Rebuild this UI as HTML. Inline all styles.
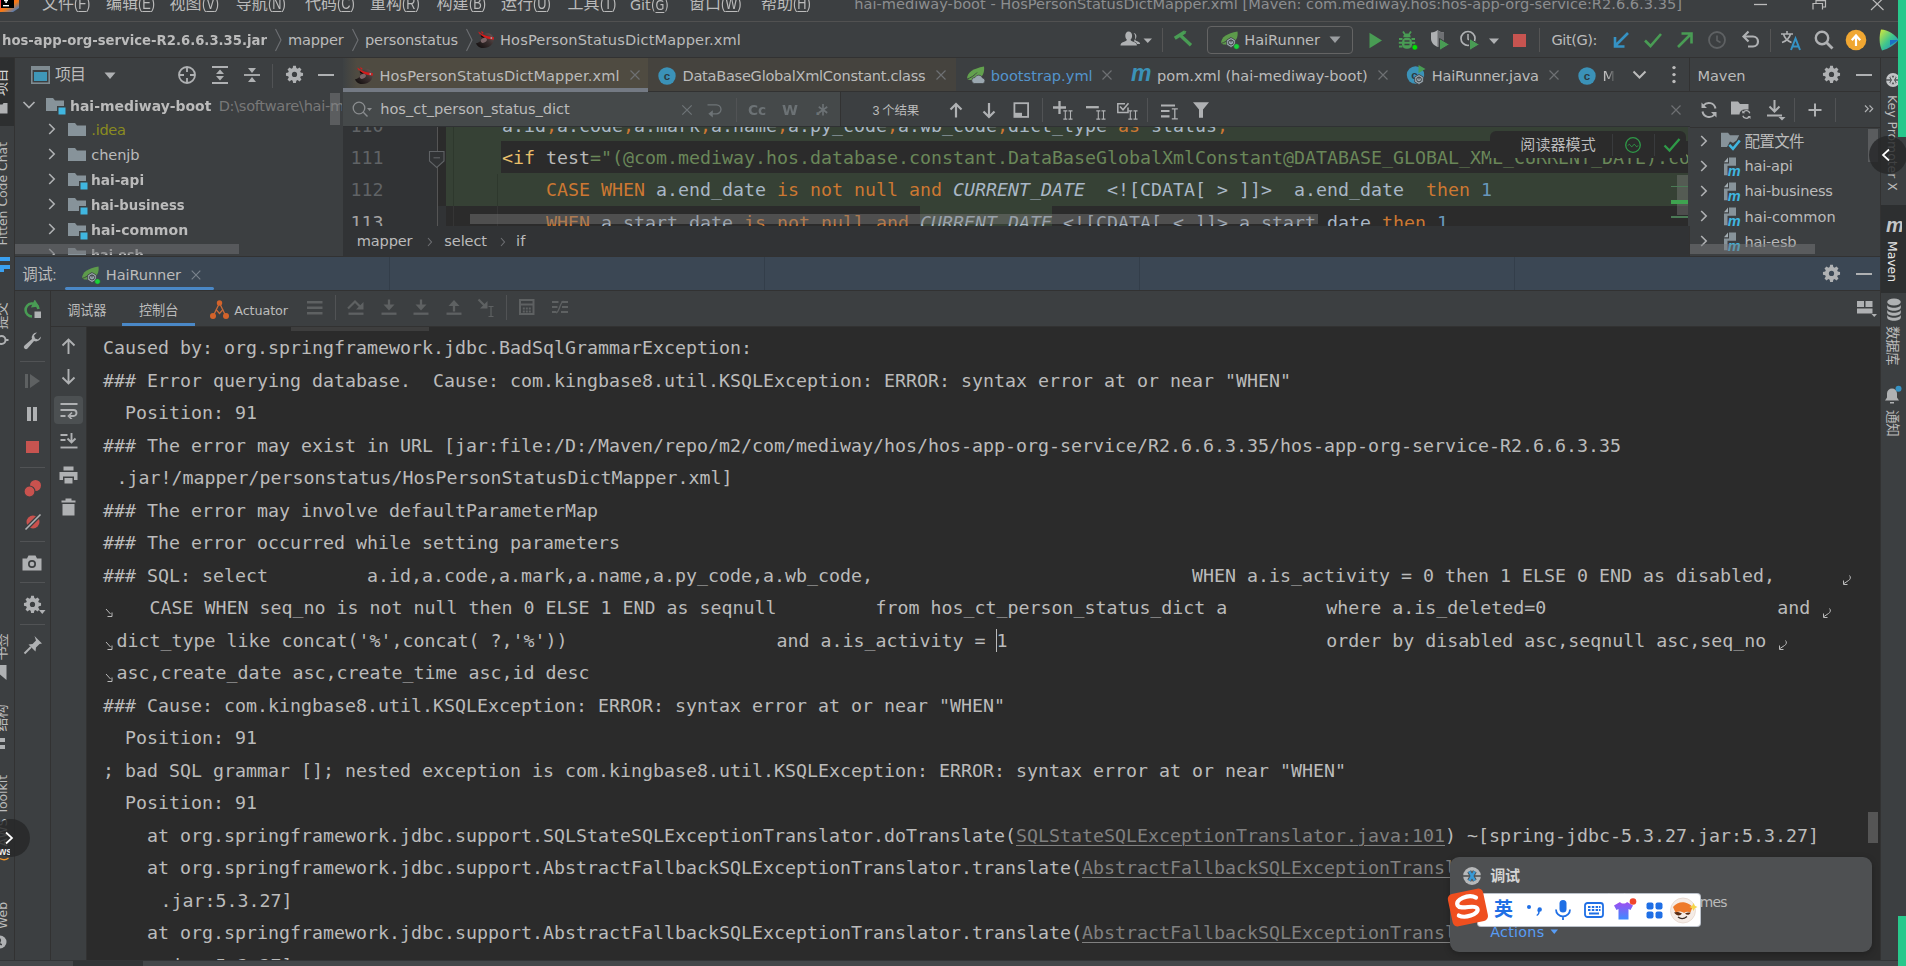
<!DOCTYPE html><html lang="zh"><head><meta charset="utf-8"><title>hai-mediway-boot</title><style>
html,body{margin:0;padding:0;}
body{width:1906px;height:966px;overflow:hidden;background:#3c3f41;position:relative;}
#root{position:absolute;left:0;top:0;width:1906px;height:966px;overflow:hidden;}
#root>div,#root>svg,#root>span{position:absolute;}
.t{white-space:pre;display:block;text-underline-offset:3px;}
u{text-decoration:underline;text-decoration-thickness:1px;}
</style></head><body><div id="root">
<div style="left:0px;top:0px;width:1906px;height:21px;background:#3c3f41;"></div>
<div style="left:0px;top:21px;width:1906px;height:1px;background:#515151;"></div>
<div style="left:0px;top:22px;width:1906px;height:35px;background:#3c3f41;"></div>
<div style="left:0px;top:57px;width:1906px;height:1px;background:#323232;"></div>
<div style="left:0px;top:58px;width:14px;height:902px;background:#3c3f41;"></div>
<div style="left:14px;top:58px;width:1px;height:902px;background:#323232;"></div>
<div style="left:15px;top:58px;width:328px;height:34px;background:#3c3f41;"></div>
<div style="left:15px;top:92px;width:328px;height:165px;background:#3c3f41;"></div>
<div style="left:342px;top:58px;width:1px;height:199px;background:#3c3f41;"></div>
<div style="left:343px;top:58px;width:1347px;height:34px;background:#3c3f41;"></div>
<div style="left:343px;top:91px;width:1347px;height:1px;background:#323232;"></div>
<div style="left:343px;top:92px;width:1347px;height:35px;background:#45494a;"></div>
<div style="left:343px;top:126px;width:1347px;height:1px;background:#2f3133;"></div>
<div style="left:343px;top:127px;width:1347px;height:99px;background:#2b2b2b;"></div>
<div style="left:343px;top:226px;width:1347px;height:30px;background:#313335;"></div>
<div style="left:1689px;top:58px;width:1px;height:199px;background:#323232;"></div>
<div style="left:1690px;top:58px;width:190px;height:199px;background:#3c3f41;"></div>
<div style="left:1690px;top:91px;width:190px;height:1px;background:#323232;"></div>
<div style="left:1880px;top:58px;width:1px;height:902px;background:#323232;"></div>
<div style="left:1881px;top:58px;width:25px;height:902px;background:#3c3f41;"></div>
<div style="left:15px;top:256px;width:1865px;height:1px;background:#323232;"></div>
<div style="left:15px;top:257px;width:1865px;height:33px;background:#3b4754;"></div>
<div style="left:15px;top:290px;width:1865px;height:1px;background:#323232;"></div>
<div style="left:15px;top:291px;width:35px;height:669px;background:#3c3f41;"></div>
<div style="left:50px;top:291px;width:1px;height:669px;background:#323232;"></div>
<div style="left:51px;top:291px;width:1829px;height:35px;background:#3c3f41;"></div>
<div style="left:51px;top:326px;width:1829px;height:1px;background:#323232;"></div>
<div style="left:51px;top:327px;width:35px;height:633px;background:#3c3f41;"></div>
<div style="left:86px;top:327px;width:1px;height:633px;background:#323232;"></div>
<div style="left:87px;top:327px;width:1793px;height:633px;background:#2b2b2b;"></div>
<div style="left:0px;top:960px;width:1906px;height:6px;background:#3c3f41;"></div>
<div style="left:996px;top:629px;width:1px;height:23px;background:#bbbbbb;"></div>
<div style="left:0px;top:0px;width:16px;height:9px;background:#000;"></div>
<div style="left:1162px;top:28px;width:1px;height:24px;background:#555555;"></div>
<div style="left:1513px;top:34px;width:13px;height:13px;background:#c75450;"></div>
<div style="left:1539px;top:28px;width:1px;height:24px;background:#555555;"></div>
<div style="left:1770px;top:29px;width:1px;height:23px;background:#555555;"></div>
<div style="left:0px;top:58px;width:14px;height:68px;background:#2d2f30;"></div>
<div style="left:0px;top:257px;width:10px;height:4px;background:#3aa0f0;"></div>
<div style="left:0px;top:265px;width:10px;height:4px;background:#3aa0f0;"></div>
<div style="left:0px;top:269px;width:4px;height:3px;background:#3aa0f0;"></div>
<div style="left:0px;top:738px;width:5px;height:4px;background:#afb1b3;"></div>
<div style="left:0px;top:745px;width:5px;height:4px;background:#afb1b3;"></div>
<div style="left:272px;top:64px;width:1px;height:24px;background:#515355;"></div>
<div style="left:318px;top:74px;width:16px;height:2px;background:#afb1b3;"></div>
<div style="left:343px;top:58px;width:305px;height:30px;background:#4f4b41;"></div>
<div style="left:343px;top:58px;width:14px;height:30px;background:linear-gradient(90deg,#3d4143 0%,#4f4b41 100%);"></div>
<div style="left:343px;top:88px;width:305px;height:4px;background:#747a84;"></div>
<div style="left:648px;top:58px;width:308px;height:33px;background:#45433e;"></div>
<div style="left:840px;top:92px;width:850px;height:34px;background:#3c3f41;"></div>
<div style="left:840px;top:92px;width:1px;height:34px;background:#323232;"></div>
<div style="left:736px;top:98px;width:1px;height:24px;background:#515355;"></div>
<div style="left:1042px;top:98px;width:1px;height:24px;background:#515355;"></div>
<div style="left:1147px;top:98px;width:1px;height:24px;background:#515355;"></div>
<div style="left:343px;top:127px;width:94px;height:99px;background:#313335;"></div>
<div style="left:437px;top:127px;width:9px;height:79px;background:#2b2b2b;"></div>
<div style="left:437px;top:206px;width:9px;height:20px;background:#313335;"></div>
<div style="left:446px;top:127px;width:1244px;height:79px;background:#364135;"></div>
<div style="left:501px;top:141px;width:1189px;height:32px;background:#2b2b2b;"></div>
<div style="left:920px;top:206px;width:132px;height:20px;background:#364135;"></div>
<div style="left:437px;top:127px;width:1px;height:99px;background:#555555;"></div>
<div style="left:453px;top:127px;width:1px;height:79px;background:#2e382d;"></div>
<div style="left:453px;top:206px;width:1px;height:20px;background:#353535;"></div>
<div style="left:497px;top:174px;width:1px;height:32px;background:#2e382d;"></div>
<div style="left:497px;top:206px;width:1px;height:20px;background:#353535;"></div>
<div style="left:1856px;top:74px;width:16px;height:2px;background:#afb1b3;"></div>
<div style="left:1690px;top:127px;width:190px;height:1px;background:#323232;"></div>
<div style="left:1794px;top:98px;width:1px;height:24px;background:#515355;"></div>
<div style="left:1835px;top:98px;width:1px;height:24px;background:#515355;"></div>
<div style="left:1881px;top:205px;width:25px;height:88px;background:#2d2f30;"></div>
<div style="left:389px;top:257px;width:1px;height:33px;background:#333e4a;"></div>
<div style="left:764px;top:257px;width:1px;height:33px;background:#333e4a;"></div>
<div style="left:1139px;top:257px;width:1px;height:33px;background:#333e4a;"></div>
<div style="left:1514px;top:257px;width:1px;height:33px;background:#333e4a;"></div>
<div style="left:65px;top:287px;width:149px;height:3px;background:#4a88c7;border-radius:1.5px;"></div>
<div style="left:1856px;top:273px;width:16px;height:2px;background:#afb1b3;"></div>
<div style="left:122px;top:323px;width:73px;height:3px;background:#4a88c7;"></div>
<div style="left:335px;top:295px;width:1px;height:25px;background:#515355;"></div>
<div style="left:506px;top:295px;width:1px;height:25px;background:#515355;"></div>
<div style="left:291px;top:327px;width:138px;height:4px;background:#3e3e3e;"></div>
<div style="left:20px;top:361px;width:25px;height:1px;background:#515355;"></div>
<div style="left:27px;top:407px;width:3.5px;height:14px;background:#afb1b3;"></div>
<div style="left:33.4px;top:407px;width:3.5px;height:14px;background:#afb1b3;"></div>
<div style="left:26px;top:440.5px;width:12.5px;height:12.5px;background:#c75450;"></div>
<div style="left:20px;top:467px;width:25px;height:1px;background:#515355;"></div>
<div style="left:20px;top:541px;width:25px;height:1px;background:#515355;"></div>
<div style="left:20px;top:582px;width:25px;height:1px;background:#515355;"></div>
<div style="left:20px;top:624px;width:25px;height:1px;background:#515355;"></div>
<span id="t0" class="t" style='left:103px;top:332.40px;height:32px;line-height:32px;font-size:18.27px;color:#bbbbbb;font-family:"DejaVu Sans Mono","Liberation Mono",monospace;letter-spacing:0.003px;'>Caused by: org.springframework.jdbc.BadSqlGrammarException: </span>
<span id="t1" class="t" style='left:103px;top:364.90px;height:32px;line-height:32px;font-size:18.27px;color:#bbbbbb;font-family:"DejaVu Sans Mono","Liberation Mono",monospace;letter-spacing:0.003px;'>### Error querying database.  Cause: com.kingbase8.util.KSQLException: ERROR: syntax error at or near &quot;WHEN&quot;</span>
<span id="t2" class="t" style='left:103px;top:397.40px;height:32px;line-height:32px;font-size:18.27px;color:#bbbbbb;font-family:"DejaVu Sans Mono","Liberation Mono",monospace;letter-spacing:0.002px;'>  Position: 91</span>
<span id="t3" class="t" style='left:103px;top:429.90px;height:32px;line-height:32px;font-size:18.27px;color:#bbbbbb;font-family:"DejaVu Sans Mono","Liberation Mono",monospace;letter-spacing:0.003px;'>### The error may exist in URL [jar:file:/D:/Maven/repo/m2/com/mediway/hos/hos-app-org-service/R2.6.6.3.35/hos-app-org-service-R2.6.6.3.35</span>
<span id="t4" class="t" style='left:116.4px;top:462.40px;height:32px;line-height:32px;font-size:18.27px;color:#bbbbbb;font-family:"DejaVu Sans Mono","Liberation Mono",monospace;letter-spacing:0.003px;'>.jar!/mapper/personstatus/HosPersonStatusDictMapper.xml]</span>
<span id="t5" class="t" style='left:103px;top:494.90px;height:32px;line-height:32px;font-size:18.27px;color:#bbbbbb;font-family:"DejaVu Sans Mono","Liberation Mono",monospace;letter-spacing:0.003px;'>### The error may involve defaultParameterMap</span>
<span id="t6" class="t" style='left:103px;top:527.40px;height:32px;line-height:32px;font-size:18.27px;color:#bbbbbb;font-family:"DejaVu Sans Mono","Liberation Mono",monospace;letter-spacing:0.003px;'>### The error occurred while setting parameters</span>
<span id="t7" class="t" style='left:103px;top:559.90px;height:32px;line-height:32px;font-size:18.27px;color:#bbbbbb;font-family:"DejaVu Sans Mono","Liberation Mono",monospace;letter-spacing:0.003px;'>### SQL: select         a.id,a.code,a.mark,a.name,a.py_code,a.wb_code,                             WHEN a.is_activity = 0 then 1 ELSE 0 END as disabled,</span>
<span id="t8" class="t" style='left:116.4px;top:592.40px;height:32px;line-height:32px;font-size:18.27px;color:#bbbbbb;font-family:"DejaVu Sans Mono","Liberation Mono",monospace;letter-spacing:0.003px;'>   CASE WHEN seq_no is not null then 0 ELSE 1 END as seqnull         from hos_ct_person_status_dict a         where a.is_deleted=0                     and</span>
<span id="t9" class="t" style='left:116.4px;top:624.90px;height:32px;line-height:32px;font-size:18.27px;color:#bbbbbb;font-family:"DejaVu Sans Mono","Liberation Mono",monospace;letter-spacing:0.003px;'>dict_type like concat('%',concat( ?,'%'))                   and a.is_activity = 1                             order by disabled asc,seqnull asc,seq_no</span>
<span id="t10" class="t" style='left:116.4px;top:657.40px;height:32px;line-height:32px;font-size:18.27px;color:#bbbbbb;font-family:"DejaVu Sans Mono","Liberation Mono",monospace;letter-spacing:0.003px;'>asc,create_date asc,create_time asc,id desc</span>
<span id="t11" class="t" style='left:103px;top:689.90px;height:32px;line-height:32px;font-size:18.27px;color:#bbbbbb;font-family:"DejaVu Sans Mono","Liberation Mono",monospace;letter-spacing:0.003px;'>### Cause: com.kingbase8.util.KSQLException: ERROR: syntax error at or near &quot;WHEN&quot;</span>
<span id="t12" class="t" style='left:103px;top:722.40px;height:32px;line-height:32px;font-size:18.27px;color:#bbbbbb;font-family:"DejaVu Sans Mono","Liberation Mono",monospace;letter-spacing:0.002px;'>  Position: 91</span>
<span id="t13" class="t" style='left:103px;top:754.90px;height:32px;line-height:32px;font-size:18.27px;color:#bbbbbb;font-family:"DejaVu Sans Mono","Liberation Mono",monospace;letter-spacing:0.003px;'>; bad SQL grammar []; nested exception is com.kingbase8.util.KSQLException: ERROR: syntax error at or near &quot;WHEN&quot;</span>
<span id="t14" class="t" style='left:103px;top:787.40px;height:32px;line-height:32px;font-size:18.27px;color:#bbbbbb;font-family:"DejaVu Sans Mono","Liberation Mono",monospace;letter-spacing:0.002px;'>  Position: 91</span>
<span id="t15" class="t" style='left:103px;top:819.90px;height:32px;line-height:32px;font-size:18.27px;color:#bbbbbb;font-family:"DejaVu Sans Mono","Liberation Mono",monospace;letter-spacing:0.003px;'>    at org.springframework.jdbc.support.SQLStateSQLExceptionTranslator.doTranslate(</span>
<span id="t16" class="t" style='left:1016.0px;top:819.90px;height:32px;line-height:32px;font-size:18.27px;color:#808080;font-family:"DejaVu Sans Mono","Liberation Mono",monospace;letter-spacing:0.003px;'><u>SQLStateSQLExceptionTranslator.java:101</u></span>
<span id="t17" class="t" style='left:1445.0px;top:819.90px;height:32px;line-height:32px;font-size:18.27px;color:#bbbbbb;font-family:"DejaVu Sans Mono","Liberation Mono",monospace;letter-spacing:0.003px;'>) ~[spring-jdbc-5.3.27.jar:5.3.27]</span>
<span id="t18" class="t" style='left:103px;top:852.40px;height:32px;line-height:32px;font-size:18.27px;color:#bbbbbb;font-family:"DejaVu Sans Mono","Liberation Mono",monospace;letter-spacing:0.003px;'>    at org.springframework.jdbc.support.AbstractFallbackSQLExceptionTranslator.translate(</span>
<span id="t19" class="t" style='left:1082.0px;top:852.40px;height:32px;line-height:32px;font-size:18.27px;color:#808080;font-family:"DejaVu Sans Mono","Liberation Mono",monospace;letter-spacing:0.003px;'><u>AbstractFallbackSQLExceptionTranslator.java:70</u></span>
<span id="t20" class="t" style='left:1588.0px;top:852.40px;height:32px;line-height:32px;font-size:18.27px;color:#bbbbbb;font-family:"DejaVu Sans Mono","Liberation Mono",monospace;letter-spacing:0.003px;'>) ~[spring-jdbc-5.3.27</span>
<span id="t21" class="t" style='left:103px;top:917.40px;height:32px;line-height:32px;font-size:18.27px;color:#bbbbbb;font-family:"DejaVu Sans Mono","Liberation Mono",monospace;letter-spacing:0.003px;'>    at org.springframework.jdbc.support.AbstractFallbackSQLExceptionTranslator.translate(</span>
<span id="t22" class="t" style='left:1082.0px;top:917.40px;height:32px;line-height:32px;font-size:18.27px;color:#808080;font-family:"DejaVu Sans Mono","Liberation Mono",monospace;letter-spacing:0.003px;'><u>AbstractFallbackSQLExceptionTranslator.java:70</u></span>
<span id="t23" class="t" style='left:1588.0px;top:917.40px;height:32px;line-height:32px;font-size:18.27px;color:#bbbbbb;font-family:"DejaVu Sans Mono","Liberation Mono",monospace;letter-spacing:0.003px;'>) ~[spring-jdbc-5.3.27</span>
<span id="t24" class="t" style='left:116.4px;top:884.90px;height:32px;line-height:32px;font-size:18.27px;color:#bbbbbb;font-family:"DejaVu Sans Mono","Liberation Mono",monospace;letter-spacing:0.003px;'>    .jar:5.3.27]</span>
<span id="t25" class="t" style='left:116.4px;top:949.90px;height:32px;line-height:32px;font-size:18.27px;color:#bbbbbb;font-family:"DejaVu Sans Mono","Liberation Mono",monospace;letter-spacing:0.003px;'>    .jar:5.3.27]</span>
<span id="t26" class="t" style='left:42px;top:-8.70px;height:26px;line-height:26px;font-size:16px;color:#bbbbbb;font-family:"Liberation Sans","Noto Sans CJK SC",sans-serif;text-underline-offset:2px;'>文件<span style="display:inline-block;transform:scaleX(.8);transform-origin:0 50%;">(<u>F</u>)</span></span>
<span id="t27" class="t" style='left:106px;top:-8.70px;height:26px;line-height:26px;font-size:16px;color:#bbbbbb;font-family:"Liberation Sans","Noto Sans CJK SC",sans-serif;text-underline-offset:2px;'>编辑<span style="display:inline-block;transform:scaleX(.8);transform-origin:0 50%;">(<u>E</u>)</span></span>
<span id="t28" class="t" style='left:169.6px;top:-8.70px;height:26px;line-height:26px;font-size:16px;color:#bbbbbb;font-family:"Liberation Sans","Noto Sans CJK SC",sans-serif;text-underline-offset:2px;'>视图<span style="display:inline-block;transform:scaleX(.8);transform-origin:0 50%;">(<u>V</u>)</span></span>
<span id="t29" class="t" style='left:235.7px;top:-8.70px;height:26px;line-height:26px;font-size:16px;color:#bbbbbb;font-family:"Liberation Sans","Noto Sans CJK SC",sans-serif;text-underline-offset:2px;'>导航<span style="display:inline-block;transform:scaleX(.8);transform-origin:0 50%;">(<u>N</u>)</span></span>
<span id="t30" class="t" style='left:305px;top:-8.70px;height:26px;line-height:26px;font-size:16px;color:#bbbbbb;font-family:"Liberation Sans","Noto Sans CJK SC",sans-serif;text-underline-offset:2px;'>代码<span style="display:inline-block;transform:scaleX(.8);transform-origin:0 50%;">(<u>C</u>)</span></span>
<span id="t31" class="t" style='left:370px;top:-8.70px;height:26px;line-height:26px;font-size:16px;color:#bbbbbb;font-family:"Liberation Sans","Noto Sans CJK SC",sans-serif;text-underline-offset:2px;'>重构<span style="display:inline-block;transform:scaleX(.8);transform-origin:0 50%;">(<u>R</u>)</span></span>
<span id="t32" class="t" style='left:436.5px;top:-8.70px;height:26px;line-height:26px;font-size:16px;color:#bbbbbb;font-family:"Liberation Sans","Noto Sans CJK SC",sans-serif;text-underline-offset:2px;'>构建<span style="display:inline-block;transform:scaleX(.8);transform-origin:0 50%;">(<u>B</u>)</span></span>
<span id="t33" class="t" style='left:501px;top:-8.70px;height:26px;line-height:26px;font-size:16px;color:#bbbbbb;font-family:"Liberation Sans","Noto Sans CJK SC",sans-serif;text-underline-offset:2px;'>运行<span style="display:inline-block;transform:scaleX(.8);transform-origin:0 50%;">(<u>U</u>)</span></span>
<span id="t34" class="t" style='left:567.5px;top:-8.70px;height:26px;line-height:26px;font-size:16px;color:#bbbbbb;font-family:"Liberation Sans","Noto Sans CJK SC",sans-serif;text-underline-offset:2px;'>工具<span style="display:inline-block;transform:scaleX(.8);transform-origin:0 50%;">(<u>T</u>)</span></span>
<span id="t35" class="t" style='left:630px;top:-8.20px;height:26px;line-height:26px;font-size:14.32px;color:#bbbbbb;font-family:"DejaVu Sans","Liberation Sans","Noto Sans CJK SC",sans-serif;text-underline-offset:2px;'>Git<span style="display:inline-block;transform:scaleX(.8);transform-origin:0 50%;">(<u>G</u>)</span></span>
<span id="t36" class="t" style='left:689px;top:-8.70px;height:26px;line-height:26px;font-size:16px;color:#bbbbbb;font-family:"Liberation Sans","Noto Sans CJK SC",sans-serif;text-underline-offset:2px;'>窗口<span style="display:inline-block;transform:scaleX(.8);transform-origin:0 50%;">(<u>W</u>)</span></span>
<span id="t37" class="t" style='left:761px;top:-8.70px;height:26px;line-height:26px;font-size:16px;color:#bbbbbb;font-family:"Liberation Sans","Noto Sans CJK SC",sans-serif;text-underline-offset:2px;'>帮助<span style="display:inline-block;transform:scaleX(.8);transform-origin:0 50%;">(<u>H</u>)</span></span>
<span id="t38" class="t" style='left:854.3px;top:-9.00px;height:26px;line-height:26px;font-size:14.59px;color:#8c8e90;font-family:"DejaVu Sans","Liberation Sans","Noto Sans CJK SC",sans-serif;letter-spacing:0.013px;'>hai-mediway-boot - HosPersonStatusDictMapper.xml [Maven: com.mediway.hos:hos-app-org-service:R2.6.6.3.35]</span>
<span id="t39" class="t" style='left:2px;top:26.80px;height:26px;line-height:26px;font-size:14.59px;color:#bbbbbb;font-family:"DejaVu Sans","Liberation Sans","Noto Sans CJK SC",sans-serif;font-weight:700;transform:scaleX(0.9069);transform-origin:0 50%;'>hos-app-org-service-R2.6.6.3.35.jar</span>
<span id="t40" class="t" style='left:288px;top:26.80px;height:26px;line-height:26px;font-size:14.59px;color:#bbbbbb;font-family:"DejaVu Sans","Liberation Sans","Noto Sans CJK SC",sans-serif;letter-spacing:-0.185px;'>mapper</span>
<span id="t41" class="t" style='left:365px;top:26.80px;height:26px;line-height:26px;font-size:14.59px;color:#bbbbbb;font-family:"DejaVu Sans","Liberation Sans","Noto Sans CJK SC",sans-serif;letter-spacing:-0.147px;'>personstatus</span>
<span id="t42" class="t" style='left:500px;top:26.80px;height:26px;line-height:26px;font-size:14.59px;color:#bbbbbb;font-family:"DejaVu Sans","Liberation Sans","Noto Sans CJK SC",sans-serif;letter-spacing:0.135px;'>HosPersonStatusDictMapper.xml</span>
<span id="t43" class="t" style='left:1244.3px;top:26.80px;height:26px;line-height:26px;font-size:14.59px;color:#bbbbbb;font-family:"DejaVu Sans","Liberation Sans","Noto Sans CJK SC",sans-serif;letter-spacing:-0.045px;'>HaiRunner</span>
<span id="t44" class="t" style='left:1551.5px;top:26.80px;height:26px;line-height:26px;font-size:14.59px;color:#bbbbbb;font-family:"DejaVu Sans","Liberation Sans","Noto Sans CJK SC",sans-serif;letter-spacing:-0.451px;'>Git(G):</span>
<span id="t45" class="t" style='left:55px;top:61.80px;height:26px;line-height:26px;font-size:16px;color:#bbbbbb;font-family:"Liberation Sans","Noto Sans CJK SC",sans-serif;letter-spacing:-1.008px;'>项目</span>
<div style="left:15px;top:92px;width:327px;height:163px;overflow:hidden;"><span id="t46" class="t" style='position:absolute;left:54.599999999999994px;top:0.60px;height:26px;line-height:26px;font-size:14.59px;color:#bbbbbb;font-family:"DejaVu Sans","Liberation Sans","Noto Sans CJK SC",sans-serif;font-weight:700;transform:scaleX(0.9578);transform-origin:0 50%;'>hai-mediway-boot</span></div>
<div style="left:15px;top:92px;width:327px;height:163px;overflow:hidden;"><span id="t47" class="t" style='position:absolute;left:203.7px;top:0.60px;height:26px;line-height:26px;font-size:14.59px;color:#787878;font-family:"DejaVu Sans","Liberation Sans","Noto Sans CJK SC",sans-serif;letter-spacing:-0.300px;'>D:\software\hai-mediway</span></div>
<div style="left:15px;top:92px;width:327px;height:163px;overflow:hidden;"><span id="t48" class="t" style='position:absolute;left:76.3px;top:25.40px;height:26px;line-height:26px;font-size:14.59px;color:#8a8c1f;font-family:"DejaVu Sans","Liberation Sans","Noto Sans CJK SC",sans-serif;letter-spacing:-0.289px;'>.idea</span></div>
<div style="left:15px;top:92px;width:327px;height:163px;overflow:hidden;"><span id="t49" class="t" style='position:absolute;left:76.3px;top:50.30px;height:26px;line-height:26px;font-size:14.59px;color:#bbbbbb;font-family:"DejaVu Sans","Liberation Sans","Noto Sans CJK SC",sans-serif;letter-spacing:-0.097px;'>chenjb</span></div>
<div style="left:15px;top:92px;width:327px;height:163px;overflow:hidden;"><span id="t50" class="t" style='position:absolute;left:76.3px;top:75.30px;height:26px;line-height:26px;font-size:14.59px;color:#bbbbbb;font-family:"DejaVu Sans","Liberation Sans","Noto Sans CJK SC",sans-serif;font-weight:700;transform:scaleX(0.9390);transform-origin:0 50%;'>hai-api</span></div>
<div style="left:15px;top:92px;width:327px;height:163px;overflow:hidden;"><span id="t51" class="t" style='position:absolute;left:76.3px;top:100.40px;height:26px;line-height:26px;font-size:14.59px;color:#bbbbbb;font-family:"DejaVu Sans","Liberation Sans","Noto Sans CJK SC",sans-serif;font-weight:700;transform:scaleX(0.9064);transform-origin:0 50%;'>hai-business</span></div>
<div style="left:15px;top:92px;width:327px;height:163px;overflow:hidden;"><span id="t52" class="t" style='position:absolute;left:76.3px;top:125.40px;height:26px;line-height:26px;font-size:14.59px;color:#bbbbbb;font-family:"DejaVu Sans","Liberation Sans","Noto Sans CJK SC",sans-serif;font-weight:700;transform:scaleX(0.9652);transform-origin:0 50%;'>hai-common</span></div>
<div style="left:15px;top:92px;width:327px;height:163px;overflow:hidden;"><span id="t53" class="t" style='position:absolute;left:76.3px;top:150.40px;height:26px;line-height:26px;font-size:14.59px;color:#bbbbbb;font-family:"DejaVu Sans","Liberation Sans","Noto Sans CJK SC",sans-serif;font-weight:700;transform:scaleX(0.8745);transform-origin:0 50%;'>hai-esb</span></div>
<span id="t54" class="t" style='left:379.5px;top:62.60px;height:26px;line-height:26px;font-size:14.59px;color:#bbbbbb;font-family:"DejaVu Sans","Liberation Sans","Noto Sans CJK SC",sans-serif;letter-spacing:0.104px;'>HosPersonStatusDictMapper.xml</span>
<span id="t55" class="t" style='left:682.5px;top:62.60px;height:26px;line-height:26px;font-size:14.59px;color:#bbbbbb;font-family:"DejaVu Sans","Liberation Sans","Noto Sans CJK SC",sans-serif;letter-spacing:-0.275px;'>DataBaseGlobalXmlConstant.class</span>
<span id="t56" class="t" style='left:990.7px;top:62.60px;height:26px;line-height:26px;font-size:14.59px;color:#5394cc;font-family:"DejaVu Sans","Liberation Sans","Noto Sans CJK SC",sans-serif;letter-spacing:0.014px;'>bootstrap.yml</span>
<span id="t57" class="t" style='left:1157px;top:62.60px;height:26px;line-height:26px;font-size:14.59px;color:#bbbbbb;font-family:"DejaVu Sans","Liberation Sans","Noto Sans CJK SC",sans-serif;letter-spacing:-0.014px;'>pom.xml (hai-mediway-boot)</span>
<span id="t58" class="t" style='left:1431.8px;top:62.60px;height:26px;line-height:26px;font-size:14.59px;color:#bbbbbb;font-family:"DejaVu Sans","Liberation Sans","Noto Sans CJK SC",sans-serif;letter-spacing:-0.211px;'>HaiRunner.java</span>
<span id="t59" class="t" style='left:1602.6px;top:62.60px;height:26px;line-height:26px;font-size:14.59px;color:#bbbbbb;font-family:"DejaVu Sans","Liberation Sans","Noto Sans CJK SC",sans-serif;-webkit-mask-image:linear-gradient(90deg,#000 40%,transparent 100%);mask-image:linear-gradient(90deg,#000 40%,transparent 100%);'>M</span>
<span id="t60" class="t" style='left:380.3px;top:95.80px;height:26px;line-height:26px;font-size:14.59px;color:#bbbbbb;font-family:"DejaVu Sans","Liberation Sans","Noto Sans CJK SC",sans-serif;letter-spacing:-0.042px;'>hos_ct_person_status_dict</span>
<span id="t61" class="t" style='left:748px;top:97.10px;height:26px;line-height:26px;font-size:14.77px;color:#6c7275;font-family:"DejaVu Sans","Liberation Sans","Noto Sans CJK SC",sans-serif;font-weight:700;transform:scaleX(0.9340);transform-origin:0 50%;'>Cc</span>
<span id="t62" class="t" style='left:782px;top:97.10px;height:26px;line-height:26px;font-size:14.77px;color:#6c7275;font-family:"DejaVu Sans","Liberation Sans","Noto Sans CJK SC",sans-serif;font-weight:700;transform:scaleX(0.9818);transform-origin:0 50%;'>W</span>
<span id="t63" class="t" style='left:815px;top:97.10px;height:26px;line-height:26px;font-size:14.77px;color:#6c7275;font-family:"DejaVu Sans","Liberation Sans","Noto Sans CJK SC",sans-serif;font-weight:700;'>.</span>
<span id="t64" class="t" style='left:818.3px;top:93.30px;height:43px;line-height:43px;font-size:24.16px;color:#6c7275;font-family:"DejaVu Sans","Liberation Sans","Noto Sans CJK SC",sans-serif;font-weight:700;transform:scaleX(0.7911);transform-origin:0 50%;'>*</span>
<span id="t65" class="t" style='left:872.5px;top:100.60px;height:20px;line-height:20px;font-size:12.5px;color:#bbbbbb;font-family:"Liberation Sans","Noto Sans CJK SC",sans-serif;letter-spacing:-0.287px;'>3 个结果</span>
<div style="left:343px;top:127px;width:1345px;height:99px;overflow:hidden;"><span id="t66" class="t" style='position:absolute;left:7.5px;top:-17.10px;height:32px;line-height:32px;font-size:18.27px;color:#606366;font-family:"DejaVu Sans Mono","Liberation Mono",monospace;'>110</span></div>
<div style="left:343px;top:127px;width:1345px;height:99px;overflow:hidden;"><span id="t67" class="t" style='position:absolute;left:7.5px;top:14.90px;height:32px;line-height:32px;font-size:18.27px;color:#606366;font-family:"DejaVu Sans Mono","Liberation Mono",monospace;'>111</span></div>
<div style="left:343px;top:127px;width:1345px;height:99px;overflow:hidden;"><span id="t68" class="t" style='position:absolute;left:7.5px;top:47.40px;height:32px;line-height:32px;font-size:18.27px;color:#606366;font-family:"DejaVu Sans Mono","Liberation Mono",monospace;'>112</span></div>
<div style="left:343px;top:127px;width:1345px;height:99px;overflow:hidden;"><span id="t69" class="t" style='position:absolute;left:7.5px;top:79.90px;height:32px;line-height:32px;font-size:18.27px;color:#a4a3a3;font-family:"DejaVu Sans Mono","Liberation Mono",monospace;'>113</span></div>
<div style="left:343px;top:127px;width:1345px;height:99px;overflow:hidden;"><span id="t70" class="t" style='position:absolute;left:159px;top:-17.10px;height:32px;line-height:32px;font-size:18.27px;color:#a9b7c6;font-family:"DejaVu Sans Mono","Liberation Mono",monospace;letter-spacing:0.002px;'><span style="color:#a9b7c6;">a.id</span><span style="color:#cc7832;">,</span><span style="color:#a9b7c6;">a.code</span><span style="color:#cc7832;">,</span><span style="color:#a9b7c6;">a.mark</span><span style="color:#cc7832;">,</span><span style="color:#a9b7c6;">a.name</span><span style="color:#cc7832;">,</span><span style="color:#a9b7c6;">a.py_code</span><span style="color:#cc7832;">,</span><span style="color:#a9b7c6;">a.wb_code</span><span style="color:#cc7832;">,</span><span style="color:#a9b7c6;">dict_type </span><span style="color:#cc7832;">as</span><span style="color:#a9b7c6;"> status</span><span style="color:#cc7832;">,</span></span></div>
<div style="left:343px;top:127px;width:1345px;height:99px;overflow:hidden;"><span id="t71" class="t" style='position:absolute;left:159px;top:14.90px;height:32px;line-height:32px;font-size:18.27px;color:#a9b7c6;font-family:"DejaVu Sans Mono","Liberation Mono",monospace;letter-spacing:0.003px;'><span style="color:#e8bf6a;">&lt;if </span><span style="color:#bababa;">test</span><span style="color:#6a8759;">=&quot;(@com.mediway.hos.database.constant.DataBaseGlobalXmlConstant@DATABASE_GLOBAL_XML_CURRENT_DATE).co</span></span></div>
<div style="left:343px;top:127px;width:1345px;height:99px;overflow:hidden;"><span id="t72" class="t" style='position:absolute;left:203px;top:47.40px;height:32px;line-height:32px;font-size:18.27px;color:#a9b7c6;font-family:"DejaVu Sans Mono","Liberation Mono",monospace;letter-spacing:0.003px;'><span style="color:#cc7832;">CASE WHEN </span><span style="color:#a9b7c6;">a.end_date </span><span style="color:#cc7832;">is not null and </span><span style="color:#a9b7c6;font-style:italic;">CURRENT_DATE</span><span style="color:#a9b7c6;">  &lt;![CDATA[ &gt; ]]&gt;  a.end_date  </span><span style="color:#cc7832;">then </span><span style="color:#6897bb;">1</span></span></div>
<div style="left:343px;top:127px;width:1345px;height:99px;overflow:hidden;"><span id="t73" class="t" style='position:absolute;left:203px;top:79.90px;height:32px;line-height:32px;font-size:18.27px;color:#a9b7c6;font-family:"DejaVu Sans Mono","Liberation Mono",monospace;letter-spacing:0.003px;'><span style="color:#cc7832;">WHEN </span><span style="color:#a9b7c6;">a.start_date </span><span style="color:#cc7832;">is not null and </span><span style="color:#a9b7c6;font-style:italic;">CURRENT_DATE</span><span style="color:#a9b7c6;"> &lt;![CDATA[ &lt; ]]&gt; a.start_date </span><span style="color:#cc7832;">then </span><span style="color:#6897bb;">1</span></span></div>
<span id="t75" class="t" style='left:356.7px;top:228.30px;height:26px;line-height:26px;font-size:14.59px;color:#bbbbbb;font-family:"DejaVu Sans","Liberation Sans","Noto Sans CJK SC",sans-serif;letter-spacing:-0.135px;'>mapper</span>
<span id="t76" class="t" style='left:444.3px;top:228.30px;height:26px;line-height:26px;font-size:14.59px;color:#bbbbbb;font-family:"DejaVu Sans","Liberation Sans","Noto Sans CJK SC",sans-serif;letter-spacing:-0.105px;'>select</span>
<span id="t77" class="t" style='left:516px;top:228.30px;height:26px;line-height:26px;font-size:14.59px;color:#bbbbbb;font-family:"DejaVu Sans","Liberation Sans","Noto Sans CJK SC",sans-serif;letter-spacing:0.156px;'>if</span>
<span id="t78" class="t" style='left:1697.4px;top:62.60px;height:26px;line-height:26px;font-size:14.59px;color:#bbbbbb;font-family:"DejaVu Sans","Liberation Sans","Noto Sans CJK SC",sans-serif;letter-spacing:-0.032px;'>Maven</span>
<div style="left:1690px;top:128px;width:190px;height:127px;overflow:hidden;"><span id="t79" class="t" style='position:absolute;left:54.40000000000009px;top:0.90px;height:25px;line-height:25px;font-size:15.5px;color:#bbbbbb;font-family:"Liberation Sans","Noto Sans CJK SC",sans-serif;letter-spacing:-0.604px;'>配置文件</span></div>
<div style="left:1690px;top:128px;width:190px;height:127px;overflow:hidden;"><span id="t80" class="t" style='position:absolute;left:54.40000000000009px;top:25.40px;height:26px;line-height:26px;font-size:14.59px;color:#bbbbbb;font-family:"DejaVu Sans","Liberation Sans","Noto Sans CJK SC",sans-serif;letter-spacing:-0.219px;'>hai-api</span></div>
<div style="left:1690px;top:128px;width:190px;height:127px;overflow:hidden;"><span id="t81" class="t" style='position:absolute;left:54.40000000000009px;top:50.40px;height:26px;line-height:26px;font-size:14.59px;color:#bbbbbb;font-family:"DejaVu Sans","Liberation Sans","Noto Sans CJK SC",sans-serif;letter-spacing:-0.228px;'>hai-business</span></div>
<div style="left:1690px;top:128px;width:190px;height:127px;overflow:hidden;"><span id="t82" class="t" style='position:absolute;left:54.40000000000009px;top:75.50px;height:26px;line-height:26px;font-size:14.59px;color:#bbbbbb;font-family:"DejaVu Sans","Liberation Sans","Noto Sans CJK SC",sans-serif;letter-spacing:0.032px;'>hai-common</span></div>
<div style="left:1690px;top:128px;width:190px;height:127px;overflow:hidden;"><span id="t83" class="t" style='position:absolute;left:54.40000000000009px;top:100.60px;height:26px;line-height:26px;font-size:14.59px;color:#bbbbbb;font-family:"DejaVu Sans","Liberation Sans","Noto Sans CJK SC",sans-serif;letter-spacing:-0.188px;'>hai-esb</span></div>
<span id="t84" class="t" style='left:22.2px;top:262.00px;height:25px;line-height:25px;font-size:15.5px;color:#bbbbbb;font-family:"Liberation Sans","Noto Sans CJK SC",sans-serif;letter-spacing:-0.504px;'>调试:</span>
<span id="t85" class="t" style='left:105.8px;top:262.00px;height:26px;line-height:26px;font-size:14.59px;color:#bbbbbb;font-family:"DejaVu Sans","Liberation Sans","Noto Sans CJK SC",sans-serif;letter-spacing:-0.112px;'>HaiRunner</span>
<span id="t86" class="t" style='left:67.3px;top:300.10px;height:21px;line-height:21px;font-size:13.2px;color:#bbbbbb;font-family:"Liberation Sans","Noto Sans CJK SC",sans-serif;letter-spacing:-0.188px;'>调试器</span>
<span id="t87" class="t" style='left:139px;top:300.10px;height:21px;line-height:21px;font-size:13.2px;color:#bbbbbb;font-family:"Liberation Sans","Noto Sans CJK SC",sans-serif;letter-spacing:-0.087px;'>控制台</span>
<span id="t88" class="t" style='left:234.3px;top:298.90px;height:23px;line-height:23px;font-size:12.8px;color:#bbbbbb;font-family:"DejaVu Sans","Liberation Sans","Noto Sans CJK SC",sans-serif;letter-spacing:-0.132px;'>Actuator</span>
<svg style="left:0px;top:0px;" width="20" height="12" viewBox="0 0 20 12"><defs><linearGradient id="ij" x1="0" y1="0" x2="1" y2="1"><stop offset="0" stop-color="#fe315d"/><stop offset=".5" stop-color="#f97a12"/><stop offset="1" stop-color="#087cfa"/></linearGradient></defs><path d="M0 0h19v8l-6 4H0z" fill="url(#ij)"/><rect x="1" y="0" width="13" height="8" fill="#000"/><rect x="3" y="5" width="6" height="1.4" fill="#fff"/><path d="M4 0h4v1.2H6.8V3H5.4V1.2H4z" fill="#fff"/></svg>
<svg style="left:1750px;top:0px;" width="140" height="12" viewBox="0 0 140 12"><path d="M4 4.5h13" stroke="#bbb" stroke-width="1.3"/><path d="M63 9.5V3.5h9.5V9.5M66 3.5V0M66 0.6h9.5V7h-3" stroke="#bbb" stroke-width="1.2" fill="none"/><path d="M121 -2l12.5 12M133.5 -2L121 10" stroke="#bbb" stroke-width="1.2"/></svg>
<svg style="left:273.5px;top:28px;" width="9" height="24" viewBox="0 0 9 24"><path d="M1.5 1l5.5 11-5.5 11" stroke="#6e7073" stroke-width="1.1" fill="none"/></svg>
<svg style="left:350.5px;top:28px;" width="9" height="24" viewBox="0 0 9 24"><path d="M1.5 1l5.5 11-5.5 11" stroke="#6e7073" stroke-width="1.1" fill="none"/></svg>
<svg style="left:464.5px;top:28px;" width="9" height="24" viewBox="0 0 9 24"><path d="M1.5 1l5.5 11-5.5 11" stroke="#6e7073" stroke-width="1.1" fill="none"/></svg>
<svg style="left:475px;top:30px;" width="20.0" height="20.0" viewBox="0 0 20 20"><defs><linearGradient id="mb1" x1="0" y1="1" x2="1" y2="0"><stop offset="0" stop-color="#0d0a0a"/><stop offset=".55" stop-color="#3a2f2f"/><stop offset="1" stop-color="#6a5858"/></linearGradient></defs><path d="M0.800 13.500C4 12.800 6 11 6.300 8.500 6.800 4.500 11 2.500 14.500 3.500 18.500 4.800 19.800 9.500 17.500 13.500 15 17.500 9 19 5 17.500 3 16.500 1.800 15 0.800 13.500z" fill="url(#mb1)"/><ellipse cx="8.800" cy="10.300" rx="3.300" ry="2.200" transform="rotate(-28 8.800 10.300)" fill="#7b6567"/><ellipse cx="7.600" cy="6.300" rx="2" ry="1.100" transform="rotate(20 7.600 6.300)" fill="#050505"/><path d="M5.500 3.800C8 4 10.500 5.800 13 6.300L19 7.300 18.600 9.700C14 9.700 10 8.200 6.500 5.600z" fill="#d41c1c"/><path d="M3 1.500l3.200 1.800-1.200 1.500zM6.300 0.800l2.500 2.200-2 .8z" fill="#d41c1c"/><circle cx="16.300" cy="8" r=".9" fill="#9aa0a8"/></svg>
<svg style="left:1119px;top:28px;" width="36" height="24" viewBox="0 0 36 24"><path d="M9.5 3.5c2.2 0 3.6 1.8 3.6 4.2 0 1.8-.8 3.2-1.6 4 .3 1.2 1.6 1.7 3.4 2.3 1.9.7 3 1.4 3 3.5H1.5c0-2.100 1.1-2.800 3-3.500 1.800-.600 3.100-1.100 3.400-2.300-.8-.8-1.600-2.200-1.600-4 0-2.400 1.400-4.200 3.200-4.200z" fill="#afb1b3"/><path d="M14.5 5c1.800 0 2.900 1.400 2.900 3.300 0 1.400-.6 2.500-1.300 3.200.3 1 1.300 1.400 2.700 1.900 1.500.5 2.300 1.100 2.300 2.600h-3c-.4-1.500-1.700-2.100-3.400-2.700.9-1.100 1.500-2.600 1.500-4.400 0-1.500-.5-2.800-1.300-3.700z" fill="#afb1b3"/><path d="M24.500 10.500h8.500l-4.250 4.500z" fill="#afb1b3"/></svg>
<svg style="left:1172px;top:28px;" width="24" height="24" viewBox="0 0 24 24"><path d="M2.800 10.300L12.800 4" stroke="#499c54" stroke-width="3.600"/><path d="M12 2.500l2.500 1-1.500 2z" fill="#499c54"/><path d="M8.500 7.500L19 17.200" stroke="#499c54" stroke-width="3.300"/></svg>
<div style="left:1207px;top:26px;width:144px;height:26px;border:1px solid #646464;border-radius:4px;box-sizing:content-box;"></div>
<svg style="left:1329px;top:36px;" width="13" height="8" viewBox="0 0 13 8"><path d="M0.500 0.500h11l-5.500 6.500z" fill="#9a9da0"/></svg>
<svg style="left:1220px;top:30px;" width="20" height="20" viewBox="0 0 20 20"><path d="M1 13.500C1 7 7 3.500 17.500 1.500c.8 5.500-1.500 10-5.500 12-3.500 1.700-8 1.500-11 0z" fill="#5d9b4b"/><path d="M1 13.500c3.500-1 7-3 9.500-6" stroke="#3c3f41" stroke-width=".9" fill="none"/><path d="M11 7.500l4.300 2.500v5L11 17.500 6.700 15v-5z" fill="#9aa7b0" stroke="#3c3f41" stroke-width=".8"/><circle cx="11" cy="12.500" r="2.500" fill="none" stroke="#3c3f41" stroke-width="1"/><path d="M11 9.800v2.700" stroke="#3c3f41" stroke-width="1"/><circle cx="16.500" cy="16.500" r="2.800" fill="#19d33a" stroke="#3c3f41" stroke-width=".6"/></svg>
<svg style="left:1368px;top:32px;" width="16" height="17" viewBox="0 0 16 17"><path d="M1.500 0.800L14 8.500 1.500 16.200z" fill="#499c54"/></svg>
<svg style="left:1397px;top:29px;" width="22" height="22" viewBox="0 0 22 22"><path d="M6 2.500L8.500 6.200M14 2.500L11.500 6.200" stroke="#499c54" stroke-width="1.800"/><path d="M6.300 8.200a3.700 3.700 0 0 1 7.400 0z" fill="#499c54"/><rect x="5" y="8.800" width="10" height="11" rx="4.500" fill="#499c54"/><path d="M7.500 12h5M7.500 15.500h5" stroke="#3c3f41" stroke-width="1.500"/><path d="M2 10h3.500M1.800 13.800h3.500M2 17.600h3.500M18 10h-3.500M18.200 13.800h-3.500M18 17.600h-3.500" stroke="#499c54" stroke-width="2"/><circle cx="17.800" cy="18.300" r="2.800" fill="#00e400" stroke="#3c3f41" stroke-width=".7"/></svg>
<svg style="left:1429px;top:29px;" width="22" height="22" viewBox="0 0 22 22"><path d="M2 3.500c3 0 5-1 6.500-2.500C10 2.500 12 3.500 15 3.500v6c0 4-3 7-6.500 8.500C5 16.500 2 13.500 2 9.500z" fill="#afb1b3"/><path d="M8.500 3v13" stroke="#3c3f41" stroke-width="0" /><path d="M8.500 1v17c3.500-1.500 6.500-4.500 6.500-8.500v-6c-3 0-5-1-6.500-2.500z" fill="#6e7073"/><path d="M10.500 9.500l10 6-10 6z" fill="#499c54" stroke="#3c3f41" stroke-width="1"/></svg>
<svg style="left:1459px;top:29px;" width="42" height="22" viewBox="0 0 42 22"><circle cx="9" cy="9.500" r="7" fill="none" stroke="#afb1b3" stroke-width="1.700"/><path d="M9 5v5l3 2" stroke="#afb1b3" stroke-width="1.500" fill="none"/><path d="M10.500 9.500l10 6-10 6z" fill="#499c54" stroke="#3c3f41" stroke-width="1"/><path d="M30 9.500h10l-5 5.500z" fill="#afb1b3"/></svg>
<svg style="left:1611px;top:30px;" width="20" height="20" viewBox="0 0 20 20"><path d="M17 3L5 15M4 7v9.500h9.500" stroke="#3592c4" stroke-width="2.600" fill="none"/></svg>
<svg style="left:1643px;top:30px;" width="20" height="20" viewBox="0 0 20 20"><path d="M2 10.500l5.500 5.500L18 4" stroke="#499c54" stroke-width="2.600" fill="none"/></svg>
<svg style="left:1675px;top:30px;" width="20" height="20" viewBox="0 0 20 20"><path d="M3 17L15 5M6.500 3.500H16.500v10" stroke="#499c54" stroke-width="2.600" fill="none"/></svg>
<svg style="left:1707px;top:30px;" width="20" height="20" viewBox="0 0 20 20"><circle cx="10" cy="10" r="8" fill="none" stroke="#5e6163" stroke-width="1.800"/><path d="M10 5.500v5l3.500 2" stroke="#5e6163" stroke-width="1.600" fill="none"/></svg>
<svg style="left:1741px;top:30px;" width="20" height="20" viewBox="0 0 20 20"><path d="M3 6.500h9a5 5 0 0 1 0 10H7" stroke="#afb1b3" stroke-width="2.200" fill="none"/><path d="M7.500 1.500L2.500 6.500l5 5" stroke="#afb1b3" stroke-width="2.200" fill="none"/></svg>
<svg style="left:1780px;top:29px;" width="24" height="24" viewBox="0 0 24 24"><path d="M1 5h12M7 2v3M3.500 5c1 4 4 7 8 8.500M10.500 5c-1 4-4 7-8.500 8.500" stroke="#afb1b3" stroke-width="1.600" fill="none"/><path d="M11 21l4.500-11.500L20 21M12.500 17.500h6" stroke="#3592c4" stroke-width="2" fill="none"/></svg>
<svg style="left:1813px;top:29px;" width="22" height="22" viewBox="0 0 22 22"><circle cx="9" cy="9" r="6.200" fill="none" stroke="#afb1b3" stroke-width="2.400"/><path d="M13.500 13.500l6 6" stroke="#afb1b3" stroke-width="2.800"/></svg>
<svg style="left:1845px;top:29px;" width="22" height="22" viewBox="0 0 22 22"><circle cx="11" cy="11" r="10.300" fill="#f0a732"/><path d="M11 17v-9M6.800 11.200L11 6.500l4.200 4.700" stroke="#fff" stroke-width="2.200" fill="none"/></svg>
<svg style="left:1878px;top:28px;" width="22" height="24" viewBox="0 0 22 24"><defs><linearGradient id="cg" x1="0" y1="0" x2="1" y2="1"><stop offset="0" stop-color="#d8e83a"/><stop offset=".5" stop-color="#3ec58e"/><stop offset="1" stop-color="#1e7fd6"/></linearGradient></defs><path d="M3 1.500C10 2 17 6 20.500 12 17 17 10 21 4 22.500 1 16 1 8 3 1.500z" fill="url(#cg)"/><path d="M12 12L20.500 12 12 17.500z" fill="#1c6fc4"/></svg>
<span style='left:1px;top:69px;font-size:14px;color:#d8d8d8;font-family:"Liberation Sans","Noto Sans CJK SC",sans-serif;white-space:pre;line-height:20px;height:20px;transform-origin:0 0;transform:rotate(-90deg) translate(-100%,-10px);letter-spacing:-0.5px;'>项目</span>
<span style='left:3px;top:142px;font-size:12.4px;color:#bbbbbb;font-family:"DejaVu Sans","Liberation Sans",sans-serif;white-space:pre;line-height:20px;height:20px;transform-origin:0 0;transform:rotate(-90deg) translate(-100%,-10px);'>Fitten Code Chat</span>
<span style='left:1px;top:303px;font-size:14px;color:#bbbbbb;font-family:"Liberation Sans","Noto Sans CJK SC",sans-serif;white-space:pre;line-height:20px;height:20px;transform-origin:0 0;transform:rotate(-90deg) translate(-100%,-10px);letter-spacing:-0.8px;'>提交</span>
<span style='left:1px;top:633.5px;font-size:14px;color:#bbbbbb;font-family:"Liberation Sans","Noto Sans CJK SC",sans-serif;white-space:pre;line-height:20px;height:20px;transform-origin:0 0;transform:rotate(-90deg) translate(-100%,-10px);letter-spacing:-0.8px;'>书签</span>
<span style='left:1px;top:704.5px;font-size:14px;color:#bbbbbb;font-family:"Liberation Sans","Noto Sans CJK SC",sans-serif;white-space:pre;line-height:20px;height:20px;transform-origin:0 0;transform:rotate(-90deg) translate(-100%,-10px);letter-spacing:-0.8px;'>结构</span>
<span style='left:3px;top:775px;font-size:12.4px;color:#bbbbbb;font-family:"DejaVu Sans","Liberation Sans",sans-serif;white-space:pre;line-height:20px;height:20px;transform-origin:0 0;transform:rotate(-90deg) translate(-100%,-10px);'>AWS Toolkit</span>
<span style='left:3px;top:902px;font-size:12.4px;color:#bbbbbb;font-family:"DejaVu Sans","Liberation Sans",sans-serif;white-space:pre;line-height:20px;height:20px;transform-origin:0 0;transform:rotate(-90deg) translate(-100%,-10px);'>Web</span>
<svg style="left:0px;top:102px;" width="8" height="12" viewBox="0 0 8 12"><path d="M0 2.500h2.500l1 -1.500H7.500V11.500H0z" fill="#afb1b3"/></svg>
<svg style="left:0px;top:333px;" width="9" height="14" viewBox="0 0 9 14"><circle cx="1.500" cy="7" r="4" fill="none" stroke="#afb1b3" stroke-width="2"/><path d="M5.500 7h3" stroke="#afb1b3" stroke-width="2"/></svg>
<svg style="left:0px;top:665px;" width="7" height="15" viewBox="0 0 7 15"><path d="M0 0h6.500v15L0 9.500z" fill="#afb1b3"/></svg>
<svg style="left:0px;top:934px;" width="8" height="16" viewBox="0 0 8 16"><circle cx="0" cy="8" r="6.500" fill="#afb1b3"/><path d="M-2 4.500c2 0 3 1.500 2 3s0 3 2 3" stroke="#3c3f41" stroke-width="1.400" fill="none"/></svg>
<svg style="left:31px;top:66px;" width="19" height="18" viewBox="0 0 19 18"><rect x="0.800" y="0.800" width="17.400" height="16.400" fill="none" stroke="#7f8b91" stroke-width="1.600"/><rect x="0" y="0" width="19" height="4" fill="#7f8b91"/><rect x="3" y="6" width="13" height="9" fill="#40b6e0" fill-opacity=".75"/></svg>
<svg style="left:104px;top:72px;" width="12" height="8" viewBox="0 0 12 8"><path d="M0.500 0.500h11l-5.500 6.500z" fill="#afb1b3"/></svg>
<svg style="left:177px;top:65px;" width="20" height="20" viewBox="0 0 20 20"><circle cx="10" cy="10" r="8" fill="none" stroke="#afb1b3" stroke-width="1.800"/><path d="M10 2v5M10 13v5M2 10h5M13 10h5" stroke="#afb1b3" stroke-width="1.800"/></svg>
<svg style="left:211px;top:65px;" width="18" height="20" viewBox="0 0 18 20"><path d="M1 2h16M1 18h16" stroke="#afb1b3" stroke-width="1.800"/><path d="M9 4.500l4 4.500H5zM9 15.500l4-4.500H5z" fill="#afb1b3"/></svg>
<svg style="left:243px;top:65px;" width="18" height="20" viewBox="0 0 18 20"><path d="M1 10h16" stroke="#afb1b3" stroke-width="1.800"/><path d="M9 8l4-5H5zM9 12l4 5H5z" fill="#afb1b3"/></svg>
<svg style="left:284.5px;top:65.0px;" width="19" height="19" viewBox="0 0 20 22"><path d="M8.400 1h3.200l.5 2.600 1.500.7 2.200-1.500 2.300 2.300-1.500 2.200.7 1.500 2.600.5v3.200l-2.600.5-.7 1.500 1.500 2.200-2.300 2.300-2.200-1.500-1.500.7-.5 2.600H8.400l-.5-2.600-1.500-.7-2.200 1.500-2.300-2.300 1.500-2.200-.7-1.500L.1 12.500V9.300l2.600-.5.7-1.500-1.500-2.200 2.300-2.300 2.200 1.500 1.500-.7z" fill="#afb1b3"/><circle cx="10" cy="10.900" r="3" fill="#3c3f41"/></svg>
<div style="left:15px;top:92px;width:327px;height:163px;overflow:hidden;"><!--c--><svg style="position:absolute;left:7px;top:7.799999999999997px;" width="14" height="10" viewBox="0 0 14 10"><path d="M1.500 2l5.500 5.500L12.500 2" stroke="#afb1b3" stroke-width="1.700" fill="none"/></svg></div>
<div style="left:15px;top:92px;width:327px;height:163px;overflow:hidden;"><!--c--><svg style="position:absolute;left:31px;top:3.799999999999997px;" width="20" height="20" viewBox="0 0 20 20"><path d="M0 2h7l2 2.500h9V10H11v5H0z" fill="#87939a"/><rect x="12.500" y="11.500" width="7" height="7" fill="#40b6e0"/></svg></div>
<div style="left:15px;top:92px;width:327px;height:163px;overflow:hidden;"><!--c--><svg style="position:absolute;left:31.5px;top:29.799999999999997px;" width="10" height="14" viewBox="0 0 10 14"><path d="M2.200 2l5 5-5 5" stroke="#afb1b3" stroke-width="1.600" fill="none"/></svg></div>
<div style="left:15px;top:92px;width:327px;height:163px;overflow:hidden;"><!--c--><svg style="position:absolute;left:53px;top:28.599999999999994px;" width="20" height="20" viewBox="0 0 20 20"><path d="M0 2h7l2 2.500h9V15H0z" fill="#87939a"/></svg></div>
<div style="left:15px;top:92px;width:327px;height:163px;overflow:hidden;"><!--c--><svg style="position:absolute;left:31.5px;top:54.69999999999999px;" width="10" height="14" viewBox="0 0 10 14"><path d="M2.200 2l5 5-5 5" stroke="#afb1b3" stroke-width="1.600" fill="none"/></svg></div>
<div style="left:15px;top:92px;width:327px;height:163px;overflow:hidden;"><!--c--><svg style="position:absolute;left:53px;top:53.5px;" width="20" height="20" viewBox="0 0 20 20"><path d="M0 2h7l2 2.500h9V15H0z" fill="#87939a"/></svg></div>
<div style="left:15px;top:92px;width:327px;height:163px;overflow:hidden;"><!--c--><svg style="position:absolute;left:31.5px;top:79.69999999999999px;" width="10" height="14" viewBox="0 0 10 14"><path d="M2.200 2l5 5-5 5" stroke="#afb1b3" stroke-width="1.600" fill="none"/></svg></div>
<div style="left:15px;top:92px;width:327px;height:163px;overflow:hidden;"><!--c--><svg style="position:absolute;left:53px;top:78.5px;" width="20" height="20" viewBox="0 0 20 20"><path d="M0 2h7l2 2.500h9V10H11v5H0z" fill="#87939a"/><rect x="12.500" y="11.500" width="7" height="7" fill="#40b6e0"/></svg></div>
<div style="left:15px;top:92px;width:327px;height:163px;overflow:hidden;"><!--c--><svg style="position:absolute;left:31.5px;top:104.79999999999998px;" width="10" height="14" viewBox="0 0 10 14"><path d="M2.200 2l5 5-5 5" stroke="#afb1b3" stroke-width="1.600" fill="none"/></svg></div>
<div style="left:15px;top:92px;width:327px;height:163px;overflow:hidden;"><!--c--><svg style="position:absolute;left:53px;top:103.6px;" width="20" height="20" viewBox="0 0 20 20"><path d="M0 2h7l2 2.500h9V10H11v5H0z" fill="#87939a"/><rect x="12.500" y="11.500" width="7" height="7" fill="#40b6e0"/></svg></div>
<div style="left:15px;top:92px;width:327px;height:163px;overflow:hidden;"><!--c--><svg style="position:absolute;left:31.5px;top:129.79999999999998px;" width="10" height="14" viewBox="0 0 10 14"><path d="M2.200 2l5 5-5 5" stroke="#afb1b3" stroke-width="1.600" fill="none"/></svg></div>
<div style="left:15px;top:92px;width:327px;height:163px;overflow:hidden;"><!--c--><svg style="position:absolute;left:53px;top:128.6px;" width="20" height="20" viewBox="0 0 20 20"><path d="M0 2h7l2 2.500h9V10H11v5H0z" fill="#87939a"/><rect x="12.500" y="11.500" width="7" height="7" fill="#40b6e0"/></svg></div>
<div style="left:15px;top:92px;width:327px;height:163px;overflow:hidden;"><!--c--><svg style="position:absolute;left:31.5px;top:154.79999999999998px;" width="10" height="14" viewBox="0 0 10 14"><path d="M2.200 2l5 5-5 5" stroke="#afb1b3" stroke-width="1.600" fill="none"/></svg></div>
<div style="left:15px;top:92px;width:327px;height:163px;overflow:hidden;"><!--c--><svg style="position:absolute;left:53px;top:153.6px;" width="20" height="20" viewBox="0 0 20 20"><path d="M0 2h7l2 2.500h9V10H11v5H0z" fill="#87939a"/><rect x="12.500" y="11.500" width="7" height="7" fill="#40b6e0"/></svg></div>
<svg style="left:353.5px;top:65.5px;" width="20.0" height="20.0" viewBox="0 0 20 20"><defs><linearGradient id="mb2" x1="0" y1="1" x2="1" y2="0"><stop offset="0" stop-color="#0d0a0a"/><stop offset=".55" stop-color="#3a2f2f"/><stop offset="1" stop-color="#6a5858"/></linearGradient></defs><path d="M0.800 13.500C4 12.800 6 11 6.300 8.500 6.800 4.500 11 2.500 14.500 3.500 18.500 4.800 19.800 9.500 17.500 13.500 15 17.500 9 19 5 17.500 3 16.500 1.800 15 0.800 13.500z" fill="url(#mb2)"/><ellipse cx="8.800" cy="10.300" rx="3.300" ry="2.200" transform="rotate(-28 8.800 10.300)" fill="#7b6567"/><ellipse cx="7.600" cy="6.300" rx="2" ry="1.100" transform="rotate(20 7.600 6.300)" fill="#050505"/><path d="M5.500 3.800C8 4 10.500 5.800 13 6.300L19 7.300 18.600 9.700C14 9.700 10 8.200 6.500 5.600z" fill="#d41c1c"/><path d="M3 1.500l3.200 1.800-1.200 1.500zM6.300 0.800l2.500 2.200-2 .8z" fill="#d41c1c"/><circle cx="16.300" cy="8" r=".9" fill="#9aa0a8"/></svg>
<svg style="left:628.5px;top:69px;" width="12" height="12" viewBox="0 0 12 12"><path d="M1.5 1.5L10.5 10.5M10.5 1.5L1.5 10.5" stroke="#6e7073" stroke-width="1.2"/></svg>
<svg style="left:658px;top:66.5px;" width="18" height="18" viewBox="0 0 18 18"><circle cx="9" cy="9" r="8.700" fill="#3b92b8"/><text x="9" y="13.300" font-size="11.500" font-family='"Liberation Sans",sans-serif' font-weight="700" text-anchor="middle" fill="#2b3a42">c</text></svg>
<svg style="left:935px;top:69px;" width="12" height="12" viewBox="0 0 12 12"><path d="M1.5 1.5L10.5 10.5M10.5 1.5L1.5 10.5" stroke="#6e7073" stroke-width="1.2"/></svg>
<svg style="left:966px;top:65px;" width="20" height="20" viewBox="0 0 20 20"><path d="M1 14C1 7.500 7 3.500 18 1.500c.8 6-1.500 10.500-5.500 12.500-3.500 1.700-8.500 1.500-11.500 0z" fill="#62a14e"/><path d="M1 14c3.500-1 7.500-3.500 10-6.500" stroke="#3c3f41" stroke-width=".9" fill="none"/><path d="M8.500 18.500a3 3 0 0 1 .5-6 4 4 0 0 1 7.500.5 2.800 2.800 0 0 1 .3 5.500z" fill="#9aa7b0" stroke="#3c3f41" stroke-width=".7"/></svg>
<svg style="left:1101px;top:69px;" width="12" height="12" viewBox="0 0 12 12"><path d="M1.5 1.5L10.5 10.5M10.5 1.5L1.5 10.5" stroke="#6e7073" stroke-width="1.2"/></svg>
<svg style="left:1131px;top:67px;" width="20" height="16" viewBox="0 0 20 16"><text x="0" y="14" font-size="23" font-family='"Liberation Sans",sans-serif' font-weight="700" font-style="italic" fill="#3b92b8">m</text></svg>
<svg style="left:1376.5px;top:69px;" width="12" height="12" viewBox="0 0 12 12"><path d="M1.5 1.5L10.5 10.5M10.5 1.5L1.5 10.5" stroke="#6e7073" stroke-width="1.2"/></svg>
<svg style="left:1406px;top:64px;" width="22" height="22" viewBox="0 0 22 22"><circle cx="9.500" cy="11" r="8.700" fill="#3b92b8"/><text x="8.500" y="15" font-size="11.500" font-family='"Liberation Sans",sans-serif' font-weight="700" text-anchor="middle" fill="#2b3a42">c</text><path d="M12.500 1l7 4-7 4z" fill="#499c54"/><path d="M13 10.500l4.300 2.500v5L13 20.500 8.700 18v-5z" fill="#9aa7b0" stroke="#3c3f41" stroke-width=".8"/><circle cx="13" cy="15.500" r="2.400" fill="none" stroke="#3c3f41" stroke-width="1"/><path d="M13 12.800v2.700" stroke="#3c3f41" stroke-width="1"/></svg>
<svg style="left:1548px;top:69px;" width="12" height="12" viewBox="0 0 12 12"><path d="M1.5 1.5L10.5 10.5M10.5 1.5L1.5 10.5" stroke="#6e7073" stroke-width="1.2"/></svg>
<svg style="left:1578px;top:66.5px;" width="18" height="18" viewBox="0 0 18 18"><circle cx="9" cy="9" r="8.700" fill="#3b92b8"/><text x="9" y="13.300" font-size="11.500" font-family='"Liberation Sans",sans-serif' font-weight="700" text-anchor="middle" fill="#2b3a42">c</text></svg>
<svg style="left:1632px;top:70px;" width="15" height="10" viewBox="0 0 15 10"><path d="M1.500 1.500l6 6 6-6" stroke="#bbbbbb" stroke-width="2" fill="none"/></svg>
<svg style="left:1671px;top:63px;" width="6" height="24" viewBox="0 0 6 24"><circle cx="3" cy="4.600" r="1.700" fill="#bbbbbb"/><circle cx="3" cy="11.600" r="1.700" fill="#bbbbbb"/><circle cx="3" cy="18.500" r="1.700" fill="#bbbbbb"/></svg>
<svg style="left:351px;top:99px;" width="22" height="20" viewBox="0 0 22 20"><circle cx="8" cy="9" r="5.800" fill="none" stroke="#8a8d8f" stroke-width="1.300"/><path d="M12.300 13.300l4.200 4.200" stroke="#8a8d8f" stroke-width="1.400"/><path d="M16 9h5l-2.500 3z" fill="#8a8d8f"/></svg>
<svg style="left:681px;top:103.8px;" width="12" height="12" viewBox="0 0 12 12"><path d="M1.2999999999999998 1.2999999999999998L10.7 10.7M10.7 1.2999999999999998L1.2999999999999998 10.7" stroke="#6e7477" stroke-width="1.2"/></svg>
<svg style="left:706px;top:102px;" width="18" height="16" viewBox="0 0 18 16"><path d="M1.500 2.800H10.500a4.500 4.500 0 0 1 0 9H6.500" stroke="#6e7477" stroke-width="1.300" fill="none"/><path d="M6.800 8.200L2.300 11.800l4.500 3.600z" fill="#6e7477"/></svg>
<svg style="left:949px;top:102px;" width="14" height="17" viewBox="0 0 14 17"><path d="M7 15.500V2M1.500 7.500L7 2l5.500 5.500" stroke="#afb1b3" stroke-width="2.200" fill="none"/></svg>
<svg style="left:982px;top:102px;" width="14" height="17" viewBox="0 0 14 17"><path d="M7 1v13.500M1.500 9.500L7 15l5.500-5.500" stroke="#afb1b3" stroke-width="2.200" fill="none"/></svg>
<svg style="left:1013px;top:102px;" width="17" height="17" viewBox="0 0 17 17"><rect x="1.400" y="1.200" width="13.700" height="13.700" fill="none" stroke="#afb1b3" stroke-width="1.800"/><rect x="1.400" y="10.800" width="7.600" height="4.200" fill="#afb1b3"/></svg>
<svg style="left:1052px;top:100px;" width="22" height="22" viewBox="0 0 22 22"><path d="M7.500 1v13M1 7.500h13" stroke="#afb1b3" stroke-width="2.300"/><path d="M11.3 10.9h4M11.3 19.1h4M13.3 10.9v8.200M16.5 10.9h4M16.5 19.1h4M18.5 10.9v8.200" stroke="#afb1b3" stroke-width="1.100" fill="none"/></svg>
<svg style="left:1085px;top:100px;" width="22" height="22" viewBox="0 0 22 22"><path d="M1 7.200h12.800" stroke="#afb1b3" stroke-width="2.300"/><path d="M11.3 10.9h4M11.3 19.1h4M13.3 10.9v8.200M16.5 10.9h4M16.5 19.1h4M18.5 10.9v8.200" stroke="#afb1b3" stroke-width="1.100" fill="none"/></svg>
<svg style="left:1116px;top:100px;" width="23" height="22" viewBox="0 0 23 22"><path d="M12 7.500v5H1.800v-8.700H9" stroke="#afb1b3" stroke-width="1.500" fill="none"/><path d="M4 6.500l3 3.200 5.500-6.500" stroke="#afb1b3" stroke-width="1.600" fill="none"/><path d="M12.3 10.9h4M12.3 19.1h4M14.3 10.9v8.200M17.5 10.9h4M17.5 19.1h4M19.5 10.9v8.200" stroke="#afb1b3" stroke-width="1.100" fill="none"/></svg>
<svg style="left:1160px;top:102px;" width="19" height="18" viewBox="0 0 19 18"><path d="M1 3.500h14M1 9h8.500M1 14.300h8.500" stroke="#afb1b3" stroke-width="2.200"/><path d="M11.800 6.800h6M11.800 16.800h6M14.800 6.800v10" stroke="#afb1b3" stroke-width="1.300"/></svg>
<svg style="left:1193px;top:102px;" width="17" height="17" viewBox="0 0 17 17"><path d="M0 0.300h16l-6 7.200v8.200h-4v-8.200z" fill="#afb1b3"/></svg>
<svg style="left:1670px;top:104px;" width="12" height="12" viewBox="0 0 12 12"><path d="M1.5 1.5L10.5 10.5M10.5 1.5L1.5 10.5" stroke="#6e7073" stroke-width="1.2"/></svg>
<svg style="left:428px;top:150px;" width="18" height="19" viewBox="0 0 18 19"><path d="M1.500 1.500h14.500v9.500l-7.250 6.500L1.500 11z" fill="#313335" stroke="#606366" stroke-width="1.100"/><path d="M5.500 7.800h6.500" stroke="#606366" stroke-width="1.100"/></svg>
<svg style="left:427px;top:237px;" width="6" height="10" viewBox="0 0 6 10"><path d="M1 1l3.500 4L1 9" stroke="#6e7073" stroke-width="1.100" fill="none"/></svg>
<svg style="left:500px;top:237px;" width="6" height="10" viewBox="0 0 6 10"><path d="M1 1l3.500 4L1 9" stroke="#6e7073" stroke-width="1.100" fill="none"/></svg>
<svg style="left:1821.5px;top:65.0px;" width="19" height="19" viewBox="0 0 20 22"><path d="M8.400 1h3.200l.5 2.600 1.500.7 2.200-1.500 2.300 2.300-1.500 2.200.7 1.500 2.600.5v3.200l-2.600.5-.7 1.500 1.500 2.200-2.300 2.300-2.200-1.500-1.500.7-.5 2.600H8.400l-.5-2.600-1.500-.7-2.200 1.500-2.300-2.300 1.500-2.200-.7-1.500L.1 12.500V9.300l2.600-.5.7-1.500-1.500-2.200 2.300-2.300 2.200 1.500 1.500-.7z" fill="#afb1b3"/><circle cx="10" cy="10.900" r="3" fill="#3c3f41"/></svg>
<svg style="left:1699px;top:100px;" width="20" height="20" viewBox="0 0 20 20"><path d="M16.500 8.500A6.800 6.800 0 0 0 4.500 5.500M3.500 11.500A6.800 6.800 0 0 0 15.500 14.500" stroke="#afb1b3" stroke-width="2" fill="none"/><path d="M2.500 2.500v5.500h5.500zM17.500 17.500v-5.500h-5.500z" fill="#afb1b3"/></svg>
<svg style="left:1731px;top:100px;" width="22" height="20" viewBox="0 0 22 20"><path d="M0 1.500h7l2 2.500h8.500V9.500H13.500a5 5 0 0 0-5 5v0H0z" fill="#afb1b3"/><path d="M18.800 13.200A3.600 3.600 0 0 0 12.500 12M11.800 15.800A3.600 3.600 0 0 0 18 17" stroke="#afb1b3" stroke-width="1.300" fill="none"/><path d="M11.200 10.200v3h3zM19.500 19v-3h-3z" fill="#afb1b3"/></svg>
<svg style="left:1766px;top:99px;" width="21" height="22" viewBox="0 0 21 22"><path d="M8.500 1v11M3.500 7.500L8.500 12.500l5-5M1 16.500h15" stroke="#afb1b3" stroke-width="2" fill="none"/><path d="M12.500 18h7l-3.500 3.500z" fill="#afb1b3"/></svg>
<svg style="left:1808px;top:103px;" width="14" height="14" viewBox="0 0 14 14"><path d="M7 0.500v13M0.500 7h13" stroke="#afb1b3" stroke-width="2"/></svg>
<svg style="left:1864px;top:105px;" width="12" height="8" viewBox="0 0 12 8"><path d="M1 .5l3.200 3.200L1 7M5.500 .5l3.200 3.200L5.500 7" stroke="#afb1b3" stroke-width="1.200" fill="none"/></svg>
<div style="left:1690px;top:128px;width:190px;height:127px;overflow:hidden;"><!--c--><svg style="position:absolute;left:9.200000000000045px;top:5.699999999999989px;" width="10" height="14" viewBox="0 0 10 14"><path d="M2.200 2l5 5-5 5" stroke="#afb1b3" stroke-width="1.600" fill="none"/></svg></div>
<div style="left:1690px;top:128px;width:190px;height:127px;overflow:hidden;"><!--c--><svg style="position:absolute;left:31px;top:3.3000000000000114px;" width="22" height="22" viewBox="0 0 22 22"><path d="M0 1.800h7l2 2.500h9.200l-2.700 5.200-3.500 2.500-3 -1.500-3 5.500H0z" fill="#87939a"/><path d="M8.300 13.800l3.700 4 6.800-8.300" stroke="#40b6e0" stroke-width="2.600" fill="none"/></svg></div>
<div style="left:1690px;top:128px;width:190px;height:127px;overflow:hidden;"><!--c--><svg style="position:absolute;left:9.200000000000045px;top:30.99999999999997px;" width="10" height="14" viewBox="0 0 10 14"><path d="M2.200 2l5 5-5 5" stroke="#afb1b3" stroke-width="1.600" fill="none"/></svg></div>
<div style="left:1690px;top:128px;width:190px;height:127px;overflow:hidden;"><!--c--><svg style="position:absolute;left:32px;top:28.599999999999994px;" width="20" height="20" viewBox="0 0 20 20"><path d="M7 .5H14V8.800H5.500V18.300H2V6.500H7z" fill="#87939a"/><path d="M2 5.300L6 .5V5.300z" fill="#a3adb3"/><text x="5.800" y="19.300" font-size="14.500" font-family='"Liberation Sans",sans-serif' font-weight="700" font-style="italic" fill="#40b6e0">m</text></svg></div>
<div style="left:1690px;top:128px;width:190px;height:127px;overflow:hidden;"><!--c--><svg style="position:absolute;left:9.200000000000045px;top:55.99999999999997px;" width="10" height="14" viewBox="0 0 10 14"><path d="M2.200 2l5 5-5 5" stroke="#afb1b3" stroke-width="1.600" fill="none"/></svg></div>
<div style="left:1690px;top:128px;width:190px;height:127px;overflow:hidden;"><!--c--><svg style="position:absolute;left:32px;top:53.599999999999994px;" width="20" height="20" viewBox="0 0 20 20"><path d="M7 .5H14V8.800H5.500V18.300H2V6.500H7z" fill="#87939a"/><path d="M2 5.300L6 .5V5.300z" fill="#a3adb3"/><text x="5.800" y="19.300" font-size="14.500" font-family='"Liberation Sans",sans-serif' font-weight="700" font-style="italic" fill="#40b6e0">m</text></svg></div>
<div style="left:1690px;top:128px;width:190px;height:127px;overflow:hidden;"><!--c--><svg style="position:absolute;left:9.200000000000045px;top:81.09999999999997px;" width="10" height="14" viewBox="0 0 10 14"><path d="M2.200 2l5 5-5 5" stroke="#afb1b3" stroke-width="1.600" fill="none"/></svg></div>
<div style="left:1690px;top:128px;width:190px;height:127px;overflow:hidden;"><!--c--><svg style="position:absolute;left:32px;top:78.69999999999999px;" width="20" height="20" viewBox="0 0 20 20"><path d="M7 .5H14V8.800H5.500V18.300H2V6.500H7z" fill="#87939a"/><path d="M2 5.300L6 .5V5.300z" fill="#a3adb3"/><text x="5.800" y="19.300" font-size="14.500" font-family='"Liberation Sans",sans-serif' font-weight="700" font-style="italic" fill="#40b6e0">m</text></svg></div>
<div style="left:1690px;top:128px;width:190px;height:127px;overflow:hidden;"><!--c--><svg style="position:absolute;left:9.200000000000045px;top:106.19999999999999px;" width="10" height="14" viewBox="0 0 10 14"><path d="M2.200 2l5 5-5 5" stroke="#afb1b3" stroke-width="1.600" fill="none"/></svg></div>
<div style="left:1690px;top:128px;width:190px;height:127px;overflow:hidden;"><!--c--><svg style="position:absolute;left:32px;top:103.80000000000001px;" width="20" height="20" viewBox="0 0 20 20"><path d="M7 .5H14V8.800H5.500V18.300H2V6.500H7z" fill="#87939a"/><path d="M2 5.300L6 .5V5.300z" fill="#a3adb3"/><text x="5.800" y="19.300" font-size="14.500" font-family='"Liberation Sans",sans-serif' font-weight="700" font-style="italic" fill="#40b6e0">m</text></svg></div>
<svg style="left:1886px;top:73px;" width="14" height="14" viewBox="0 0 18 18"><circle cx="9" cy="9" r="8.900" fill="#c4c6c8"/><path d="M0 9H18" stroke="#3c3f41" stroke-width="1.600"/><path d="M6.200 4.300L11.800 13.700M11.800 4.300L6.200 13.700" stroke="#3c3f41" stroke-width="4.400"/><path d="M6.200 4.300L11.800 13.700M11.800 4.300L6.200 13.700" stroke="#c4c6c8" stroke-width="2.500"/></svg>
<span style='left:1891.6px;top:94.6px;font-size:12.4px;color:#bbbbbb;font-family:"DejaVu Sans","Liberation Sans",sans-serif;white-space:pre;line-height:20px;height:20px;transform-origin:0 0;transform:rotate(90deg) translate(0,-10px);'>Key Promoter X</span>
<svg style="left:1886px;top:219px;" width="16" height="14" viewBox="0 0 16 14"><text x="0" y="12.500" font-size="20" font-family='"Liberation Sans",sans-serif' font-weight="700" font-style="italic" fill="#c4c6c8">m</text></svg>
<span style='left:1891.6px;top:240.9px;font-size:12.4px;color:#e8e8e8;font-family:"DejaVu Sans","Liberation Sans",sans-serif;white-space:pre;line-height:20px;height:20px;transform-origin:0 0;transform:rotate(90deg) translate(0,-10px);'>Maven</span>
<svg style="left:1887px;top:298px;" width="14" height="23" viewBox="0 0 14 23"><ellipse cx="7" cy="4" rx="6.800" ry="3.500" fill="#afb1b3"/><path d="M0.200 6.500v3c0 1.900 3 3.300 6.800 3.300s6.800-1.400 6.800-3.300v-3c0 1.900-3 3.300-6.800 3.300S0.200 8.400 0.200 6.500zM0.200 11.500v3c0 1.900 3 3.300 6.800 3.300s6.800-1.400 6.800-3.300v-3c0 1.900-3 3.300-6.800 3.300S0.200 13.400 0.200 11.500zM0.200 16.500v3c0 1.900 3 3.300 6.800 3.300s6.800-1.400 6.800-3.300v-3c0 1.900-3 3.300-6.800 3.300S0.200 18.400 0.200 16.500z" fill="#afb1b3"/></svg>
<span style='left:1892px;top:325.5px;font-size:13.5px;color:#bbbbbb;font-family:"Liberation Sans","Noto Sans CJK SC",sans-serif;white-space:pre;line-height:20px;height:20px;transform-origin:0 0;transform:rotate(90deg) translate(0,-10px);letter-spacing:-0.5px;'>数据库</span>
<svg style="left:1884px;top:385px;" width="18" height="20" viewBox="0 0 18 20"><path d="M8 3.500a5 5 0 0 1 5 5v4l2 3H1l2-3v-4a5 5 0 0 1 5-5zM6 17h4v1.500H6z" fill="#afb1b3"/><circle cx="14.500" cy="3.800" r="3" fill="#3592c4"/></svg>
<span style='left:1892px;top:409.5px;font-size:13.5px;color:#bbbbbb;font-family:"Liberation Sans","Noto Sans CJK SC",sans-serif;white-space:pre;line-height:20px;height:20px;transform-origin:0 0;transform:rotate(90deg) translate(0,-10px);letter-spacing:-0.2px;'>通知</span>
<svg style="left:81px;top:265px;" width="20" height="20" viewBox="0 0 20 20"><path d="M1 13.500C1 7 7 3.500 17.500 1.500c.8 5.500-1.500 10-5.500 12-3.500 1.700-8 1.500-11 0z" fill="#5d9b4b"/><path d="M1 13.500c3.500-1 7-3 9.500-6" stroke="#3c3f41" stroke-width=".9" fill="none"/><path d="M11 7.500l4.300 2.500v5L11 17.500 6.700 15v-5z" fill="#9aa7b0" stroke="#3c3f41" stroke-width=".8"/><circle cx="11" cy="12.500" r="2.500" fill="none" stroke="#3c3f41" stroke-width="1"/><path d="M11 9.800v2.700" stroke="#3c3f41" stroke-width="1"/><circle cx="16.500" cy="16.500" r="2.800" fill="#19d33a" stroke="#3c3f41" stroke-width=".6"/></svg>
<svg style="left:189.5px;top:269px;" width="12" height="12" viewBox="0 0 12 12"><path d="M1.7000000000000002 1.7000000000000002L10.3 10.3M10.3 1.7000000000000002L1.7000000000000002 10.3" stroke="#7a838d" stroke-width="1.1"/></svg>
<svg style="left:1821.5px;top:264.0px;" width="19" height="19" viewBox="0 0 20 22"><path d="M8.400 1h3.200l.5 2.600 1.500.7 2.200-1.500 2.300 2.300-1.500 2.200.7 1.500 2.600.5v3.200l-2.600.5-.7 1.500 1.500 2.200-2.300 2.300-2.200-1.500-1.500.7-.5 2.600H8.400l-.5-2.600-1.500-.7-2.200 1.500-2.300-2.300 1.500-2.200-.7-1.500L.1 12.500V9.300l2.600-.5.7-1.500-1.500-2.200 2.300-2.300 2.200 1.500 1.500-.7z" fill="#afb1b3"/><circle cx="10" cy="10.900" r="3" fill="#3b4754"/></svg>
<svg style="left:209px;top:299px;" width="21" height="21" viewBox="0 0 21 21"><path d="M4 17.500L10.500 4 17 17.500" stroke="#c96a3a" stroke-width="1.300" fill="none"/><path d="M10.500 4v8" stroke="#c96a3a" stroke-width="0"/><circle cx="10.500" cy="4" r="2.700" fill="#d4632a"/><circle cx="4" cy="17" r="3" fill="#d4632a"/><circle cx="17" cy="17" r="3" fill="#d4632a"/><path d="M7 10.500l3.500 4 3.500-4" stroke="#c96a3a" stroke-width="1.200" fill="none"/></svg>
<svg style="left:307px;top:300px;" width="16" height="16" viewBox="0 0 16 16"><path d="M0 2.200h15.500M0 7.700h15.500M0 13.200h15.500" stroke="#5e6162" stroke-width="2.400"/></svg>
<svg style="left:347px;top:298px;" width="18" height="18" viewBox="0 0 18 18"><path d="M1 10.500L8 3.500l5.500 5.500" stroke="#5e6162" stroke-width="2.200" fill="none"/><path d="M9 11.500h7.500V4z" fill="#5e6162"/><path d="M1.500 15.700h15" stroke="#5e6162" stroke-width="2.300"/></svg>
<svg style="left:381px;top:298px;" width="16" height="18" viewBox="0 0 16 18"><path d="M8 1.500v6" stroke="#5e6162" stroke-width="2.300"/><path d="M2.500 6.500h11L8 12.500z" fill="#5e6162"/><path d="M0.500 15.700h15" stroke="#5e6162" stroke-width="2.300"/></svg>
<svg style="left:413px;top:298px;" width="16" height="18" viewBox="0 0 16 18"><path d="M8 1.500v6" stroke="#5e6162" stroke-width="2.300"/><path d="M2.500 6.500h11L8 12.500z" fill="#5e6162"/><path d="M0.500 15.700h15" stroke="#5e6162" stroke-width="2.300"/></svg>
<svg style="left:446px;top:298px;" width="16" height="18" viewBox="0 0 16 18"><path d="M8 13.500V6" stroke="#5e6162" stroke-width="2.300"/><path d="M2.500 8h11L8 2z" fill="#5e6162"/><path d="M0.500 15.700h15" stroke="#5e6162" stroke-width="2.300"/></svg>
<svg style="left:477px;top:298px;" width="20" height="20" viewBox="0 0 20 20"><path d="M1.500 1.500l8 8" stroke="#5e6162" stroke-width="2.200"/><path d="M10.500 3v7.500H3z" fill="#5e6162"/><path d="M11.500 8.500h5M11.500 18.500h5M14 8.500v10" stroke="#5e6162" stroke-width="1.200"/></svg>
<svg style="left:519px;top:299px;" width="16" height="16" viewBox="0 0 16 16"><rect x="1" y="1" width="13.500" height="14" fill="none" stroke="#5e6162" stroke-width="2"/><path d="M1 5.500h13.500" stroke="#5e6162" stroke-width="2"/><path d="M3.800 8.500h2v2h-2zM6.800 8.500h2v2h-2zM9.800 8.500h2v2h-2zM3.800 11.500h2v2h-2zM6.800 11.500h2v2h-2zM9.800 11.500h2v2h-2z" fill="#5e6162"/></svg>
<svg style="left:552px;top:300px;" width="16" height="15" viewBox="0 0 16 15"><path d="M0 2h6.500M9.500 2H16M0 7h5.500M10 7h6M0 12h4.500M9 12h7" stroke="#5e6162" stroke-width="2"/><path d="M4 13c3.500-1 3.500-10 7.500-12" stroke="#5e6162" stroke-width="1.300" fill="none"/></svg>
<svg style="left:1857px;top:301px;" width="20" height="16" viewBox="0 0 20 16"><rect x="0" y="0" width="7" height="6" fill="#afb1b3"/><rect x="8.500" y="0" width="7" height="6" fill="#afb1b3"/><rect x="0" y="7.500" width="15.500" height="5" fill="#afb1b3"/><path d="M14.500 13h5.500l-2.750 3z" fill="#afb1b3"/></svg>
<svg style="left:23px;top:300px;" width="20" height="20" viewBox="0 0 20 20"><path d="M15.500 9A6.500 6.500 0 1 0 9 16.500" stroke="#499c54" stroke-width="2.600" fill="none"/><path d="M9.500 0.500l7 4.500-7 4.500z" fill="#499c54" transform="rotate(25 13 5)"/><rect x="11.500" y="11.500" width="6.500" height="6.500" fill="#afb1b3"/></svg>
<svg style="left:23px;top:331px;" width="20" height="20" viewBox="0 0 20 20"><path d="M18 5.500a5 5 0 0 1-7 4.500L4.500 17.500a2 2 0 0 1-3-3L9 8A5 5 0 0 1 14 1.500L11 4.500l1 3 3 1z" fill="#afb1b3"/></svg>
<svg style="left:25px;top:373px;" width="16" height="16" viewBox="0 0 16 16"><rect x="0" y="1" width="3" height="14" fill="#5e6162"/><path d="M5 1l10 7-10 7z" fill="#5e6162"/></svg>
<svg style="left:23px;top:479px;" width="20" height="20" viewBox="0 0 20 20"><circle cx="12.500" cy="6.500" r="5.500" fill="#c9524e"/><circle cx="6.500" cy="12.500" r="5.500" fill="#c9524e" stroke="#3c3f41" stroke-width="1.200"/></svg>
<svg style="left:23px;top:512px;" width="20" height="20" viewBox="0 0 20 20"><circle cx="10" cy="10" r="6.500" fill="#c9524e"/><path d="M2 18L18 2" stroke="#3c3f41" stroke-width="4"/><path d="M2.500 17.500L17.500 2.500" stroke="#afb1b3" stroke-width="1.600"/></svg>
<svg style="left:22px;top:555px;" width="20" height="16" viewBox="0 0 20 16"><path d="M0.500 3.500h4.500l1.500-3h7l1.500 3h4.500V15.500H0.500z" fill="#afb1b3"/><circle cx="10" cy="9" r="4" fill="#3c3f41"/><circle cx="10" cy="9" r="2.300" fill="#afb1b3"/></svg>
<svg style="left:22.5px;top:594.5px;" width="19" height="19" viewBox="0 0 20 22"><path d="M8.400 1h3.200l.5 2.600 1.500.7 2.200-1.500 2.300 2.300-1.500 2.200.7 1.500 2.600.5v3.200l-2.600.5-.7 1.500 1.500 2.200-2.300 2.300-2.200-1.500-1.500.7-.5 2.600H8.400l-.5-2.600-1.500-.7-2.200 1.500-2.300-2.300 1.500-2.200-.7-1.500L.1 12.500V9.300l2.600-.5.7-1.500-1.500-2.200 2.300-2.300 2.200 1.500 1.500-.7z" fill="#afb1b3"/><circle cx="10" cy="10.900" r="3" fill="#3c3f41"/></svg>
<svg style="left:39px;top:610px;" width="7" height="5" viewBox="0 0 7 5"><path d="M0 0h6.500l-3.250 4z" fill="#afb1b3"/></svg>
<svg style="left:23px;top:635px;" width="20" height="20" viewBox="0 0 20 20"><path d="M11.500 1l7.500 7.500-2.500.5-3.500 3.500-.5 4L5.500 9.500l4-.5L13 5.500z" fill="#afb1b3"/><path d="M8 12L1.500 18.500" stroke="#afb1b3" stroke-width="2"/></svg>
<svg style="left:61px;top:337px;" width="15" height="18" viewBox="0 0 15 18"><path d="M7.500 17V2.500M1.500 8.500l6-6 6 6" stroke="#afb1b3" stroke-width="1.900" fill="none"/></svg>
<svg style="left:61px;top:368px;" width="15" height="18" viewBox="0 0 15 18"><path d="M7.500 1v14.500M1.500 9.500l6 6 6-6" stroke="#afb1b3" stroke-width="1.900" fill="none"/></svg>
<div style="left:54px;top:396px;width:29px;height:28px;background:#4c5052;border-radius:4px;"></div>
<svg style="left:60px;top:402px;" width="18" height="17" viewBox="0 0 18 17"><path d="M0.500 2h17M0.500 14h5" stroke="#afb1b3" stroke-width="1.900"/><path d="M0.500 8h13a3 3 0 0 1 0 6H10" stroke="#afb1b3" stroke-width="1.900" fill="none"/><path d="M12 10.500L8.500 14l3.500 3.500" stroke="#afb1b3" stroke-width="1.700" fill="none"/></svg>
<svg style="left:60px;top:433px;" width="18" height="17" viewBox="0 0 18 17"><path d="M0.500 2h7M0.500 7h5" stroke="#afb1b3" stroke-width="1.900"/><path d="M11.500 0v9M7.500 5.500l4 4 4-4" stroke="#afb1b3" stroke-width="1.900" fill="none"/><path d="M0.500 14.500h17" stroke="#afb1b3" stroke-width="1.900"/></svg>
<svg style="left:59px;top:466px;" width="19" height="18" viewBox="0 0 19 18"><path d="M4.500 0.500h10v4h-10zM0.500 6h18v8h-3.500v-3.500h-11V14H0.500zM5.500 12h8v5.500h-8z" fill="#afb1b3"/></svg>
<svg style="left:61px;top:498px;" width="15" height="18" viewBox="0 0 15 18"><path d="M4.500 0.500h6v2h4v2H0.500v-2h4zM1.500 6h12v11.500h-12z" fill="#afb1b3"/></svg>
<svg style="left:1842px;top:574px;" width="10" height="12" viewBox="0 0 10 12"><path d="M7.500 1.500c1.500 1.500 1 4-1 5L2 9.500" stroke="#bbbbbb" stroke-width="1" fill="none"/><path d="M1.500 6.500v4h4" stroke="#bbbbbb" stroke-width="1" fill="none"/></svg>
<svg style="left:1822px;top:606.5px;" width="10" height="12" viewBox="0 0 10 12"><path d="M7.500 1.500c1.500 1.500 1 4-1 5L2 9.500" stroke="#bbbbbb" stroke-width="1" fill="none"/><path d="M1.500 6.500v4h4" stroke="#bbbbbb" stroke-width="1" fill="none"/></svg>
<svg style="left:1778px;top:639px;" width="10" height="12" viewBox="0 0 10 12"><path d="M7.500 1.500c1.500 1.500 1 4-1 5L2 9.500" stroke="#bbbbbb" stroke-width="1" fill="none"/><path d="M1.500 6.500v4h4" stroke="#bbbbbb" stroke-width="1" fill="none"/></svg>
<svg style="left:103.5px;top:607px;" width="10" height="12" viewBox="0 0 10 12"><path d="M2 2l4.500 5" stroke="#bbbbbb" stroke-width="1" fill="none"/><path d="M3.500 9.500h4.500v-4" stroke="#bbbbbb" stroke-width="1" fill="none"/></svg>
<svg style="left:103.5px;top:639.5px;" width="10" height="12" viewBox="0 0 10 12"><path d="M2 2l4.500 5" stroke="#bbbbbb" stroke-width="1" fill="none"/><path d="M3.500 9.500h4.500v-4" stroke="#bbbbbb" stroke-width="1" fill="none"/></svg>
<svg style="left:103.5px;top:672px;" width="10" height="12" viewBox="0 0 10 12"><path d="M2 2l4.500 5" stroke="#bbbbbb" stroke-width="1" fill="none"/><path d="M3.500 9.500h4.500v-4" stroke="#bbbbbb" stroke-width="1" fill="none"/></svg>
<div style="left:330px;top:93px;width:10px;height:32px;background:rgba(135,137,139,.42);"></div>
<div style="left:15px;top:244px;width:224px;height:10px;background:rgba(110,112,114,.55);"></div>
<div style="left:470px;top:214px;width:848px;height:10px;background:rgba(128,128,128,.42);"></div>
<div style="left:1677px;top:175px;width:11px;height:40px;background:rgba(140,140,140,.35);"></div>
<div style="left:1671px;top:185.5px;width:17px;height:1.5px;background:#4b7a56;"></div>
<div style="left:1671px;top:200px;width:17px;height:3.5px;background:#3fa350;"></div>
<div style="left:1671px;top:216px;width:17px;height:1.5px;background:#4b7a56;"></div>
<div style="left:1688px;top:127px;width:2px;height:99px;background:#3c3f41;"></div>
<div style="left:1490px;top:131px;width:196px;height:27px;background:#2b2b2b;border-radius:6px 6px 0 0;"></div>
<div style="left:1612px;top:134px;width:1px;height:22px;background:#393b3d;"></div>
<div style="left:1654px;top:134px;width:1px;height:22px;background:#393b3d;"></div>
<svg style="left:1624px;top:136px;" width="18" height="18" viewBox="0 0 18 18"><circle cx="9" cy="9" r="7.300" fill="none" stroke="#2f9a48" stroke-width="1.300"/><path d="M4 9.500c1-1.500 1.700-1.500 2.500 0s1.700 1.500 2.500 0 1.700-1.500 2.500 0 1.700 1.500 2.500 0" stroke="#2f9a48" stroke-width="1" fill="none"/></svg>
<svg style="left:1663px;top:137px;" width="18" height="16" viewBox="0 0 18 16"><path d="M1.500 8.500l5 5L16.500 2" stroke="#2f9a48" stroke-width="2.300" fill="none"/><path d="M3.500 6.500l3 3.200" stroke="#2b2b2b" stroke-width="1"/></svg>
<div style="left:1868px;top:129px;width:10px;height:33px;background:rgba(120,122,124,.5);"></div>
<div style="left:1690px;top:244px;width:125px;height:10px;background:rgba(120,122,124,.5);"></div>
<div style="left:1898px;top:0px;width:8px;height:137px;background:#28c88c;"></div>
<div style="left:1869px;top:136px;width:38px;height:38px;border-radius:19px;background:rgba(38,39,40,.82);"></div>
<svg style="left:1880px;top:148px;" width="12" height="14" viewBox="0 0 12 14"><path d="M9 1.500L3 7l6 5.500" stroke="#ffffff" stroke-width="1.700" fill="none"/></svg>
<div style="left:-8px;top:819px;width:38px;height:38px;border-radius:19px;background:rgba(38,39,40,.82);"></div>
<svg style="left:3px;top:831px;" width="12" height="14" viewBox="0 0 12 14"><path d="M3 1.500L9 7l-6 5.500" stroke="#ffffff" stroke-width="1.700" fill="none"/></svg>
<div style="left:1868px;top:812px;width:10px;height:31px;background:rgba(120,120,120,.55);"></div>
<div style="left:0px;top:960px;width:1906px;height:1px;background:#333537;"></div>
<div style="left:0px;top:961px;width:1906px;height:5px;background:#44474a;"></div>
<div style="left:73px;top:961px;width:70px;height:5px;background:#313436;"></div>
<div style="left:1898px;top:916px;width:8px;height:50px;background:#28c88c;"></div>
<div style="left:1450px;top:857px;width:422px;height:95px;background:#4e5052;border-radius:9px;box-shadow:0 2px 6px rgba(0,0,0,.25);"></div>
<svg style="left:1463px;top:867px;" width="18" height="18" viewBox="0 0 18 18"><circle cx="9" cy="9" r="8.900" fill="#b6b8ba"/><path d="M0 9H18" stroke="#4e5052" stroke-width="1.600"/><path d="M6.200 4.300L11.800 13.700M11.800 4.300L6.200 13.700" stroke="#4e5052" stroke-width="4.400"/><path d="M6.200 4.300L11.800 13.700M11.800 4.300L6.200 13.700" stroke="#3a9ad6" stroke-width="2.500"/></svg>
<svg style="left:1550px;top:929px;" width="9" height="6" viewBox="0 0 9 6"><path d="M0.500 0.500h7.500l-3.750 4.500z" fill="#589df6"/></svg>
<span id="t74" class="t" style='left:1520.3px;top:132.70px;height:24px;line-height:24px;font-size:15px;color:#bbbbbb;font-family:"Liberation Sans","Noto Sans CJK SC",sans-serif;letter-spacing:0.097px;'>阅读器模式</span>
<span id="t89" class="t" style='left:1490.2px;top:863.60px;height:24px;line-height:24px;font-size:15px;color:#d4d4d4;font-family:"Liberation Sans","Noto Sans CJK SC",sans-serif;font-weight:700;letter-spacing:-0.108px;'>调试</span>
<span id="t90" class="t" style='left:1692.3px;top:889.60px;height:25px;line-height:25px;font-size:13.87px;color:#bbbbbb;font-family:"DejaVu Sans","Liberation Sans","Noto Sans CJK SC",sans-serif;letter-spacing:-0.869px;'>times</span>
<span id="t91" class="t" style='left:1490.2px;top:889.10px;height:25px;line-height:25px;font-size:15.5px;color:#bbbbbb;font-family:"Liberation Sans","Noto Sans CJK SC",sans-serif;'>Ctrl+Shift+F9 已点击 38</span>
<span id="t92" class="t" style='left:1490.2px;top:918.60px;height:26px;line-height:26px;font-size:14.32px;color:#589df6;font-family:"DejaVu Sans","Liberation Sans","Noto Sans CJK SC",sans-serif;letter-spacing:0.274px;'>Actions</span>
<svg style="left:0px;top:846px;" width="10" height="18" viewBox="0 0 10 18"><text x="-7" y="9" font-size="10" font-family='"Liberation Sans",sans-serif' font-weight="700" fill="#e8e8e8">aws</text><path d="M0 12.500c3 1.800 6 1.500 8.500-.5" stroke="#f0952a" stroke-width="1.400" fill="none"/></svg>
<div style="left:1478px;top:894px;width:222px;height:32px;background:#ffffff;border-radius:3px;box-shadow:0 0 0 1px rgba(200,205,215,.9);"></div>
<svg style="left:1444px;top:885px" width="48" height="46" viewBox="0 0 48 46"><g transform="rotate(-12 24 23)"><rect x="6" y="6" width="36" height="33" rx="5" fill="#ef4f1f"/><path d="M34 14.500c-3-2.500-8-3.500-13-2.500-5 1-7.500 3.500-6.500 6.500 1 2.800 5 3.200 10 3.600 4.500.4 8 .9 8.500 3.400.6 3-3 5-8 5.500-4.500.5-9-.5-11.500-2.500" stroke="#ffffff" stroke-width="4.200" fill="none" stroke-linecap="round"/></g></svg>
<span style='left:1494px;top:899px;height:22px;line-height:22px;font-size:19px;font-weight:700;color:#1f6fe5;font-family:"Liberation Sans","Noto Sans CJK SC",sans-serif;white-space:pre;'>英</span>
<svg style="left:1525px;top:900px" width="20" height="20" viewBox="0 0 20 20"><circle cx="4" cy="7" r="2" fill="#1f6fe5"/><path d="M12.500 9.500a2.200 2.200 0 1 1 2.200 2.200c0 2-1 3.500-2.700 4.300l-.6-1c1.200-.7 1.800-1.700 1.800-2.900a2.200 2.200 0 0 1-.7-2.600z" fill="#1f6fe5"/></svg>
<svg style="left:1554px;top:899px" width="18" height="23" viewBox="0 0 18 23"><rect x="5.500" y="1" width="7" height="12.500" rx="3.500" fill="#1f6fe5"/><path d="M2 10.500a7 7 0 0 0 14 0M9 17.500v3.500" stroke="#1f6fe5" stroke-width="1.800" fill="none"/></svg>
<svg style="left:1584px;top:902px" width="20" height="16" viewBox="0 0 20 16"><rect x="1" y="1" width="18" height="14" rx="2.500" fill="none" stroke="#1f6fe5" stroke-width="1.800"/><path d="M4 5h2.500M7.800 5h2.500M11.600 5h2.500M15 5h1.500M4 8h2.500M7.800 8h2.500M11.600 8h2.500M15 8h1.500M5 11.500h10" stroke="#1f6fe5" stroke-width="1.800"/></svg>
<svg style="left:1612px;top:897px" width="26" height="26" viewBox="0 0 26 26"><defs><linearGradient id="sh" x1="0" y1="0" x2="0" y2="1"><stop offset="0" stop-color="#a04df0"/><stop offset="1" stop-color="#3d8bff"/></linearGradient></defs><path d="M2 8.500l6-3.500c1.500 2 5.500 2 7 0l6 3.500-2.500 4.500-2-1v10.500H6.500V12l-2 1z" fill="url(#sh)"/><circle cx="21" cy="4.500" r="3.300" fill="#f0452b"/></svg>
<svg style="left:1646px;top:902px" width="17" height="17" viewBox="0 0 17 17"><rect x="0.500" y="0.500" width="7" height="7" rx="2" fill="#1f6fe5"/><rect x="9.500" y="0.500" width="7" height="7" rx="2" fill="#1f6fe5"/><rect x="0.500" y="9.500" width="7" height="7" rx="2" fill="#1f6fe5"/><rect x="9.500" y="9.500" width="7" height="7" rx="2" fill="#1f6fe5"/></svg>
<svg style="left:1669px;top:896px" width="30" height="28" viewBox="0 0 30 28"><circle cx="14" cy="14.500" r="12.500" fill="#f5ece6" stroke="#e6d6cc" stroke-width=".8"/><path d="M4 11c3-4 8-5.500 12-4.500 3 .7 6 2.500 7.500 4.500l-2 5.500c-2-1-4.500-1-6.500.5-2-1.500-5.500-2-8.500-.5z" fill="#ee7a2a"/><path d="M5 16.500c2.500-1 5.500-.5 8 1-2 2.500-5 3-8-1z" fill="#5a2d14"/><path d="M16 17.500c2-1.200 4-1.300 5.500-.8-1 2.300-3.500 2.800-5.500.8z" fill="#5a2d14"/><path d="M9 21c2.500 2 6 2 9-.5" stroke="#3a2a22" stroke-width="1.200" fill="none"/><path d="M24.500 7l1.300 2.700 2.700 1.300-2.700 1.300-1.300 2.700-1.300-2.700-2.700-1.300 2.700-1.300z" fill="#f6d64a"/></svg>
</div></body></html>
